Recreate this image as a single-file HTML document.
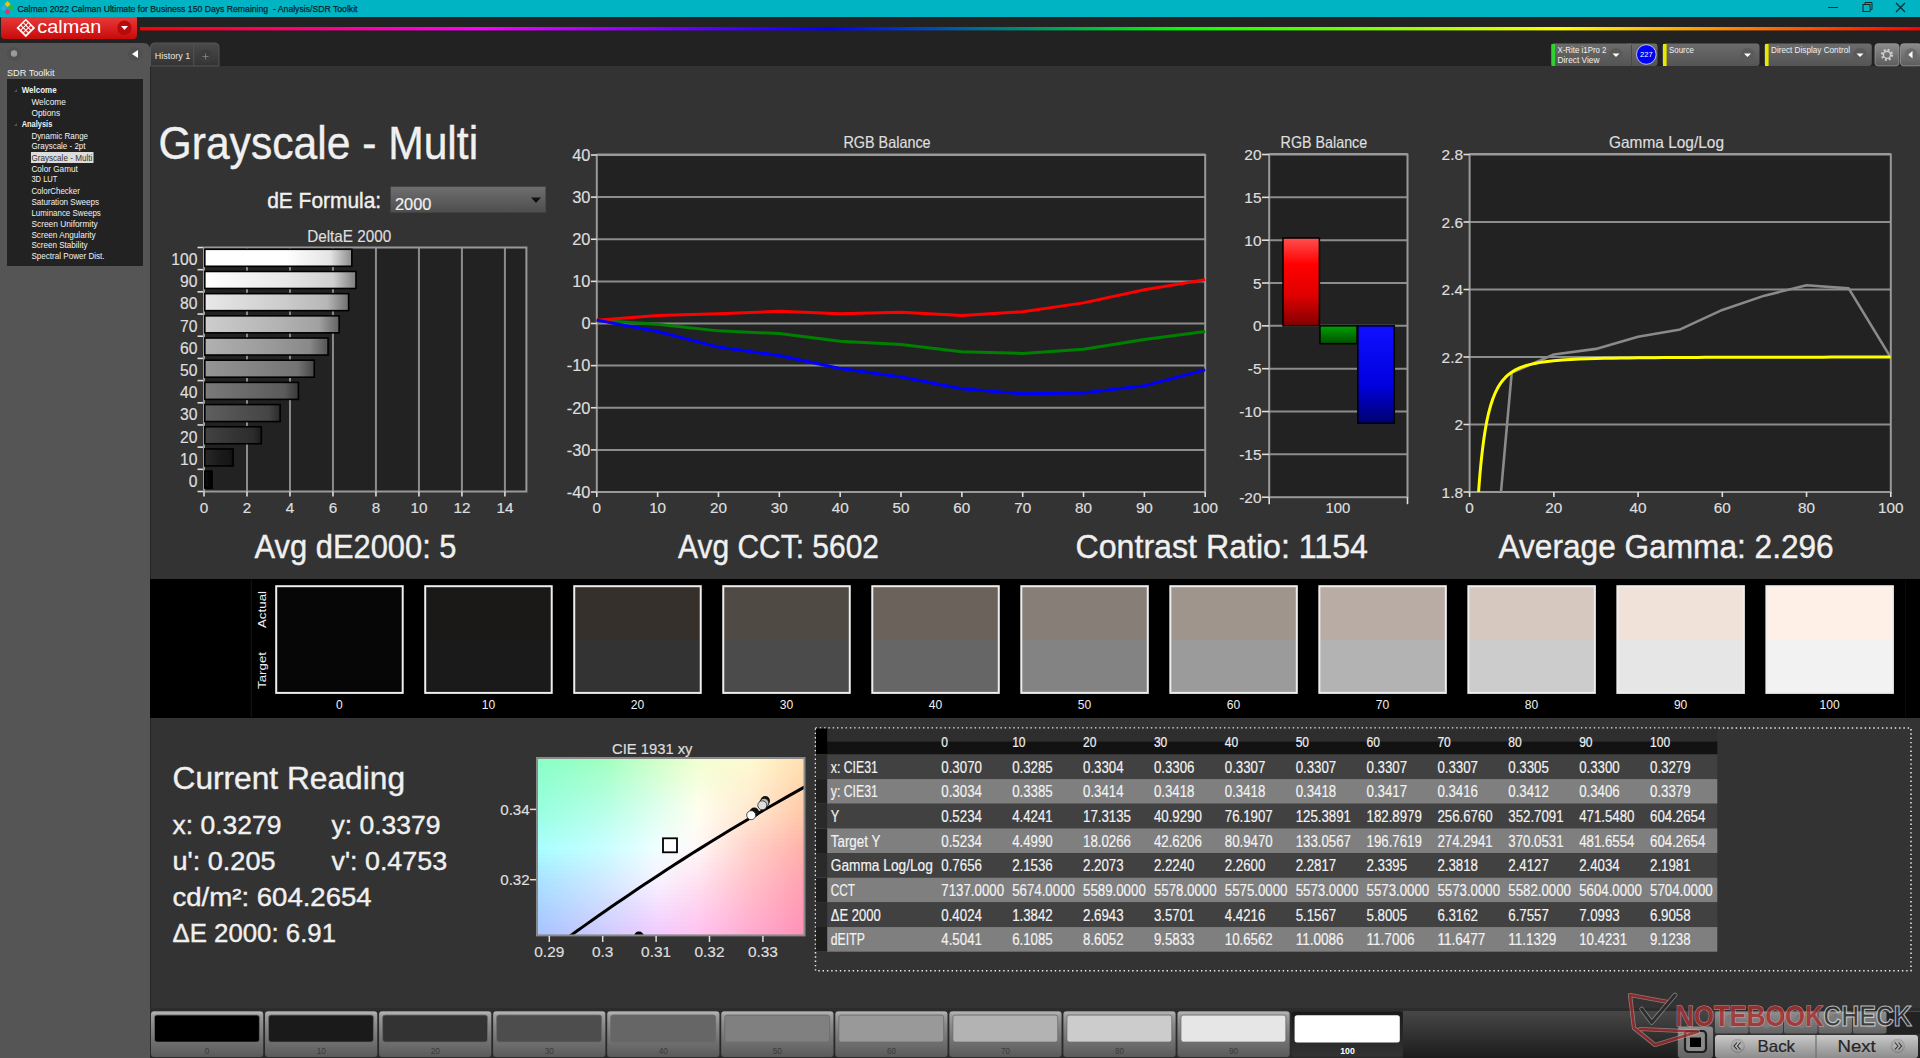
<!DOCTYPE html><html><head><meta charset="utf-8"><title>Calman</title><style>
html,body{margin:0;padding:0;background:#333;width:1920px;height:1058px;overflow:hidden;font-family:"Liberation Sans",sans-serif}
.a{position:absolute}
svg{position:absolute;left:0;top:0}
text{font-family:"Liberation Sans",sans-serif}
</style></head><body>
<div class="a" style="left:0;top:0;width:1920px;height:17px;background:#00b4c4"></div>
<div class="a" style="left:0;top:17px;width:1920px;height:49px;background:#222"></div>
<div class="a" style="left:150px;top:66px;width:1770px;height:992px;background:#333"></div>
<div class="a" style="left:0;top:43px;width:150px;height:1015px;background:#555555;border-top-right-radius:6px"></div>
<div class="a" style="left:150px;top:66px;width:1px;height:992px;background:#262626"></div>
<div class="a" style="left:7px;top:79px;width:136px;height:187px;background:#222"></div>
<div class="a" style="left:150px;top:579px;width:1770px;height:139px;background:#000"></div>
<svg width="1920" height="1058" viewBox="0 0 1920 1058">
<defs>
<linearGradient id="rainbow" x1="0" x2="1920" y1="0" y2="0" gradientUnits="userSpaceOnUse"><stop offset="0.074" stop-color="#ff0000"/><stop offset="0.25" stop-color="#ff00ff"/><stop offset="0.432" stop-color="#0000ff"/><stop offset="0.615" stop-color="#00ff00"/><stop offset="0.8125" stop-color="#ffff00"/><stop offset="1" stop-color="#ff0000"/></linearGradient>
<linearGradient id="redbtn" x1="0" x2="0" y1="0" y2="1"><stop offset="0" stop-color="#e83a3a"/><stop offset="1" stop-color="#c80a0a"/></linearGradient>
<linearGradient id="redbar" x1="0" x2="0" y1="0" y2="1"><stop offset="0" stop-color="#ff5050"/><stop offset="0.3" stop-color="#ff0000"/><stop offset="0.65" stop-color="#e00000"/><stop offset="1" stop-color="#800000"/></linearGradient>
<linearGradient id="greenbar" x1="0" x2="0" y1="0" y2="1"><stop offset="0" stop-color="#00a000"/><stop offset="1" stop-color="#005000"/></linearGradient>
<linearGradient id="bluebar" x1="0" x2="0" y1="0" y2="1"><stop offset="0" stop-color="#1010ff"/><stop offset="0.6" stop-color="#0000e0"/><stop offset="1" stop-color="#000070"/></linearGradient>
<linearGradient id="dd" x1="0" x2="0" y1="0" y2="1"><stop offset="0" stop-color="#6e6e6e"/><stop offset="1" stop-color="#4e4e4e"/></linearGradient>
<linearGradient id="btn" x1="0" x2="0" y1="0" y2="1"><stop offset="0" stop-color="#a8a8a8"/><stop offset="0.3" stop-color="#8a8a8a"/><stop offset="1" stop-color="#5a5a5a"/></linearGradient>
<linearGradient id="btnsel" x1="0" x2="0" y1="0" y2="1"><stop offset="0" stop-color="#1a1a1a"/><stop offset="1" stop-color="#333"/></linearGradient>
<linearGradient id="tbar" x1="0" x2="0" y1="0" y2="1"><stop offset="0" stop-color="#474747"/><stop offset="1" stop-color="#1c1c1c"/></linearGradient>
<linearGradient id="wid" x1="0" x2="0" y1="0" y2="1"><stop offset="0" stop-color="#6c6c6c"/><stop offset="1" stop-color="#545454"/></linearGradient>
<linearGradient id="tab" x1="0" x2="0" y1="0" y2="1"><stop offset="0" stop-color="#4a4a4a"/><stop offset="1" stop-color="#333"/></linearGradient>
</defs>
<g transform="translate(7.5,8)"><rect x="-2.2" y="-6" width="4.4" height="4.4" transform="rotate(45 0 -3.8)" fill="#f5c000"/><rect x="-6" y="-2.2" width="4.4" height="4.4" transform="rotate(45 -3.8 0)" fill="#38a8e8"/><rect x="1.6" y="-2.2" width="4.4" height="4.4" transform="rotate(45 3.8 0)" fill="#20c030"/><rect x="-2.2" y="1.6" width="4.4" height="4.4" transform="rotate(45 0 3.8)" fill="#e83070"/></g>
<text x="17.50" y="12.00" font-size="9.59" textLength="340.00" lengthAdjust="spacingAndGlyphs" fill="#02252b" stroke="#02252b" stroke-width="0.25">Calman 2022 Calman Ultimate for Business 150 Days Remaining  - Analysis/SDR Toolkit</text>
<line x1="1828" y1="7.5" x2="1838" y2="7.5" stroke="#222" stroke-width="1"/>
<rect x="1863" y="4.5" width="7" height="7" fill="none" stroke="#222" stroke-width="1"/><path d="M1865 4.5 V2.5 H1872 V9.5 H1870" fill="none" stroke="#222" stroke-width="1"/>
<path d="M1896 3 L1905 12 M1905 3 L1896 12" stroke="#222" stroke-width="1.2"/>
<path d="M1 17 H137 V35 Q137 39 133 39 H5 Q1 39 1 35 Z" fill="url(#redbtn)"/>
<g transform="translate(25.8,28) rotate(45)"><rect x="-6.6" y="-6.6" width="13.2" height="13.2" fill="#fff"/><rect x="-5.10" y="-5.10" width="2.6" height="2.6" fill="#d82020"/><rect x="-5.10" y="-1.50" width="2.6" height="2.6" fill="#d82020"/><rect x="-5.10" y="2.10" width="2.6" height="2.6" fill="#d82020"/><rect x="-1.50" y="-5.10" width="2.6" height="2.6" fill="#d82020"/><rect x="-1.50" y="-1.50" width="2.6" height="2.6" fill="#d82020"/><rect x="-1.50" y="2.10" width="2.6" height="2.6" fill="#d82020"/><rect x="2.10" y="-5.10" width="2.6" height="2.6" fill="#d82020"/><rect x="2.10" y="-1.50" width="2.6" height="2.6" fill="#d82020"/><rect x="2.10" y="2.10" width="2.6" height="2.6" fill="#d82020"/></g>
<text x="37.30" y="32.60" font-size="18.90" textLength="64.00" lengthAdjust="spacingAndGlyphs" fill="#fff" stroke="none">calman</text>
<circle cx="124.5" cy="27.8" r="7.2" fill="#b80a0a"/><path d="M121 26 H128 L124.5 30 Z" fill="#fff"/>
<rect x="140" y="27" width="1780" height="3.4" fill="url(#rainbow)"/>
<circle cx="14" cy="54" r="7" fill="#505050"/><circle cx="14" cy="53.5" r="3.2" fill="#9a9a9a"/>
<circle cx="135" cy="54" r="7" fill="#505050"/><path d="M132 54 L138 50 V58 Z" fill="#fff"/>
<text x="7.00" y="75.80" font-size="9.59" textLength="47.50" lengthAdjust="spacingAndGlyphs" fill="#f0f0f0">SDR Toolkit</text>
<rect x="31" y="152" width="62.5" height="11" fill="#dcdcdc"/>
<text x="21.70" y="93.10" font-size="8.72" textLength="34.90" lengthAdjust="spacingAndGlyphs" font-weight="bold" fill="#f2f2f2">Welcome</text>
<text x="31.40" y="105.10" font-size="8.72" textLength="34.40" lengthAdjust="spacingAndGlyphs" fill="#f2f2f2">Welcome</text>
<text x="31.40" y="116.00" font-size="8.72" textLength="28.80" lengthAdjust="spacingAndGlyphs" fill="#f2f2f2">Options</text>
<text x="21.70" y="126.80" font-size="8.72" textLength="30.60" lengthAdjust="spacingAndGlyphs" font-weight="bold" fill="#f2f2f2">Analysis</text>
<text x="31.40" y="139.00" font-size="8.72" textLength="56.60" lengthAdjust="spacingAndGlyphs" fill="#f2f2f2">Dynamic Range</text>
<text x="31.40" y="149.20" font-size="8.72" textLength="54.10" lengthAdjust="spacingAndGlyphs" fill="#f2f2f2">Grayscale - 2pt</text>
<text x="31.40" y="160.70" font-size="8.72" textLength="60.90" lengthAdjust="spacingAndGlyphs" fill="#333">Grayscale - Multi</text>
<text x="31.40" y="171.70" font-size="8.72" textLength="46.40" lengthAdjust="spacingAndGlyphs" fill="#f2f2f2">Color Gamut</text>
<text x="31.40" y="182.40" font-size="8.72" textLength="26.00" lengthAdjust="spacingAndGlyphs" fill="#f2f2f2">3D LUT</text>
<text x="31.40" y="193.90" font-size="8.72" textLength="48.40" lengthAdjust="spacingAndGlyphs" fill="#f2f2f2">ColorChecker</text>
<text x="31.40" y="204.80" font-size="8.72" textLength="67.60" lengthAdjust="spacingAndGlyphs" fill="#f2f2f2">Saturation Sweeps</text>
<text x="31.40" y="215.60" font-size="8.72" textLength="69.40" lengthAdjust="spacingAndGlyphs" fill="#f2f2f2">Luminance Sweeps</text>
<text x="31.40" y="226.50" font-size="8.72" textLength="66.30" lengthAdjust="spacingAndGlyphs" fill="#f2f2f2">Screen Uniformity</text>
<text x="31.40" y="237.80" font-size="8.72" textLength="64.30" lengthAdjust="spacingAndGlyphs" fill="#f2f2f2">Screen Angularity</text>
<text x="31.40" y="248.20" font-size="8.72" textLength="56.10" lengthAdjust="spacingAndGlyphs" fill="#f2f2f2">Screen Stability</text>
<text x="31.40" y="258.90" font-size="8.72" textLength="73.20" lengthAdjust="spacingAndGlyphs" fill="#f2f2f2">Spectral Power Dist.</text>
<path d="M14 92 L17 89 L17 92 Z" fill="#555"/><path d="M14 126 L17 123 L17 126 Z" fill="#555"/>
<path d="M150.5 66 V47 Q150.5 43 154.5 43 H215 Q219 43 219 47 V66 Z" fill="url(#tab)" stroke="#555" stroke-width="1"/>
<line x1="193.75" y1="44" x2="193.75" y2="66" stroke="#555" stroke-width="1"/>
<text x="154.80" y="58.50" font-size="9.59" textLength="35.50" lengthAdjust="spacingAndGlyphs" fill="#e8e8e8">History 1</text>
<circle cx="205.5" cy="56" r="6.5" fill="#3c3c3c"/><path d="M202.5 56.5 H208.5 M205.5 53.5 V59.5" stroke="#888" stroke-width="0.8"/>
<rect x="1551" y="43.5" width="81" height="22.5" rx="3" fill="url(#wid)"/>
<rect x="1551.5" y="44" width="3.6" height="22" fill="#30d030"/>
<text x="1557.50" y="52.60" font-size="9.30" textLength="49.00" lengthAdjust="spacingAndGlyphs" fill="#f0f0f0">X-Rite i1Pro 2</text>
<text x="1557.50" y="62.60" font-size="9.30" textLength="42.00" lengthAdjust="spacingAndGlyphs" fill="#f0f0f0">Direct View</text>
<circle cx="1616" cy="55" r="7" fill="#5a5a5a"/><path d="M1612.5 53.5 H1619.5 L1616 57 Z" fill="#fff"/>
<rect x="1625" y="43.5" width="32.5" height="22.5" rx="3" fill="url(#wid)"/><line x1="1631.5" y1="45" x2="1631.5" y2="66" stroke="#4a4a4a"/>
<circle cx="1646.3" cy="54.5" r="9.8" fill="#0000ff" stroke="#e0e0ff" stroke-width="0.8"/>
<text x="1646.30" y="57.20" font-size="7.56" text-anchor="middle" fill="#fff">227</text>
<rect x="1662.5" y="43.5" width="97.0" height="22.5" rx="3" fill="url(#wid)"/>
<rect x="1663.0" y="44" width="3.6" height="22" fill="#e8e800"/>
<text x="1669.00" y="52.60" font-size="9.30" textLength="25.00" lengthAdjust="spacingAndGlyphs" fill="#f0f0f0">Source</text>
<circle cx="1747.5" cy="55" r="7" fill="#5a5a5a"/><path d="M1744.0 53.5 H1751.0 L1747.5 57 Z" fill="#fff"/>
<rect x="1764.5" y="43.5" width="107.25" height="22.5" rx="3" fill="url(#wid)"/>
<rect x="1765.0" y="44" width="3.6" height="22" fill="#e8e800"/>
<text x="1771.00" y="52.60" font-size="9.30" textLength="79.00" lengthAdjust="spacingAndGlyphs" fill="#f0f0f0">Direct Display Control</text>
<circle cx="1860" cy="55" r="7" fill="#5a5a5a"/><path d="M1856.5 53.5 H1863.5 L1860 57 Z" fill="#fff"/>
<defs><linearGradient id="gbt" x1="0" x2="0" y1="0" y2="1"><stop offset="0" stop-color="#8c8c8c"/><stop offset="1" stop-color="#5c5c5c"/></linearGradient></defs>
<rect x="1875" y="43.8" width="24" height="22" rx="3" fill="url(#gbt)" stroke="#9a9a9a" stroke-width="0.8"/>
<circle cx="1887" cy="54.8" r="5" fill="none" stroke="#d0d0d0" stroke-width="2.2" stroke-dasharray="1.9 2.03"/><circle cx="1887" cy="54.8" r="3.6" fill="none" stroke="#d0d0d0" stroke-width="1.4"/>
<rect x="1900.5" y="43.8" width="21" height="22" rx="3" fill="url(#gbt)" stroke="#9a9a9a" stroke-width="0.8"/>
<circle cx="1911" cy="54.8" r="6.5" fill="#6a6a6a"/><path d="M1908.3 54.8 L1912.5 51 V58.6 Z" fill="#fff"/>
<text x="158.60" y="159.00" font-size="45.49" textLength="319.50" lengthAdjust="spacingAndGlyphs" fill="#f0f0f0" stroke="#f0f0f0" stroke-width="0.4">Grayscale - Multi</text>
<text x="267.20" y="207.50" font-size="22.09" textLength="114.00" lengthAdjust="spacingAndGlyphs" fill="#f0f0f0" stroke="#f0f0f0" stroke-width="0.4">dE Formula:</text>
<rect x="390.6" y="186.7" width="155.2" height="25.8" fill="url(#dd)" stroke="#444" stroke-width="0.6"/>
<text x="395.00" y="209.50" font-size="16.72" textLength="36.50" lengthAdjust="spacingAndGlyphs" fill="#f0f0f0" stroke="#f0f0f0" stroke-width="0.2">2000</text>
<path d="M531 197.5 H541 L536 203 Z" fill="#111"/>
<text x="307.20" y="242.30" font-size="16.72" textLength="84.00" lengthAdjust="spacingAndGlyphs" fill="#dedede" stroke="#dedede" stroke-width="0.2">DeltaE 2000</text>
<rect x="204" y="247.5" width="322.4" height="244.0" fill="#222"/>
<line x1="246.99" y1="247.5" x2="246.99" y2="491.5" stroke="#8c8c8c" stroke-width="2"/>
<line x1="289.97" y1="247.5" x2="289.97" y2="491.5" stroke="#8c8c8c" stroke-width="2"/>
<line x1="332.96" y1="247.5" x2="332.96" y2="491.5" stroke="#8c8c8c" stroke-width="2"/>
<line x1="375.95" y1="247.5" x2="375.95" y2="491.5" stroke="#8c8c8c" stroke-width="2"/>
<line x1="418.93" y1="247.5" x2="418.93" y2="491.5" stroke="#8c8c8c" stroke-width="2"/>
<line x1="461.92" y1="247.5" x2="461.92" y2="491.5" stroke="#8c8c8c" stroke-width="2"/>
<line x1="504.91" y1="247.5" x2="504.91" y2="491.5" stroke="#8c8c8c" stroke-width="2"/>
<rect x="204" y="247.5" width="322.4" height="244.0" fill="none" stroke="#999" stroke-width="2"/>
<defs><linearGradient id="dg0" x1="0" x2="1" y1="0" y2="0"><stop offset="0" stop-color="rgb(17,17,17)"/><stop offset="0.55" stop-color="rgb(5,5,5)"/><stop offset="0.85" stop-color="rgb(4,4,4)"/><stop offset="1" stop-color="rgb(2,2,2)"/></linearGradient></defs>
<rect x="204.80" y="471.11" width="7.25" height="17" fill="url(#dg0)" stroke="#000" stroke-width="1.6"/>
<text x="197.50" y="486.91" font-size="15.70" text-anchor="end" fill="#dedede" stroke="#dedede" stroke-width="0.2">0</text>
<defs><linearGradient id="dg1" x1="0" x2="1" y1="0" y2="0"><stop offset="0" stop-color="rgb(40,40,40)"/><stop offset="0.55" stop-color="rgb(26,26,26)"/><stop offset="0.85" stop-color="rgb(23,23,23)"/><stop offset="1" stop-color="rgb(14,14,14)"/></linearGradient></defs>
<rect x="204.80" y="448.93" width="28.35" height="17" fill="url(#dg1)" stroke="#000" stroke-width="1.6"/>
<text x="197.50" y="464.73" font-size="15.70" text-anchor="end" fill="#dedede" stroke="#dedede" stroke-width="0.2">10</text>
<defs><linearGradient id="dg2" x1="0" x2="1" y1="0" y2="0"><stop offset="0" stop-color="rgb(67,67,67)"/><stop offset="0.55" stop-color="rgb(51,51,51)"/><stop offset="0.85" stop-color="rgb(45,45,45)"/><stop offset="1" stop-color="rgb(28,28,28)"/></linearGradient></defs>
<rect x="204.80" y="426.75" width="56.51" height="17" fill="url(#dg2)" stroke="#000" stroke-width="1.6"/>
<text x="197.50" y="442.55" font-size="15.70" text-anchor="end" fill="#dedede" stroke="#dedede" stroke-width="0.2">20</text>
<defs><linearGradient id="dg3" x1="0" x2="1" y1="0" y2="0"><stop offset="0" stop-color="rgb(95,95,95)"/><stop offset="0.55" stop-color="rgb(77,77,77)"/><stop offset="0.85" stop-color="rgb(69,69,69)"/><stop offset="1" stop-color="rgb(42,42,42)"/></linearGradient></defs>
<rect x="204.80" y="404.56" width="75.33" height="17" fill="url(#dg3)" stroke="#000" stroke-width="1.6"/>
<text x="197.50" y="420.36" font-size="15.70" text-anchor="end" fill="#dedede" stroke="#dedede" stroke-width="0.2">30</text>
<defs><linearGradient id="dg4" x1="0" x2="1" y1="0" y2="0"><stop offset="0" stop-color="rgb(122,122,122)"/><stop offset="0.55" stop-color="rgb(102,102,102)"/><stop offset="0.85" stop-color="rgb(91,91,91)"/><stop offset="1" stop-color="rgb(56,56,56)"/></linearGradient></defs>
<rect x="204.80" y="382.38" width="93.63" height="17" fill="url(#dg4)" stroke="#000" stroke-width="1.6"/>
<text x="197.50" y="398.18" font-size="15.70" text-anchor="end" fill="#dedede" stroke="#dedede" stroke-width="0.2">40</text>
<defs><linearGradient id="dg5" x1="0" x2="1" y1="0" y2="0"><stop offset="0" stop-color="rgb(150,150,150)"/><stop offset="0.55" stop-color="rgb(128,128,128)"/><stop offset="0.85" stop-color="rgb(115,115,115)"/><stop offset="1" stop-color="rgb(70,70,70)"/></linearGradient></defs>
<rect x="204.80" y="360.20" width="109.43" height="17" fill="url(#dg5)" stroke="#000" stroke-width="1.6"/>
<text x="197.50" y="376.00" font-size="15.70" text-anchor="end" fill="#dedede" stroke="#dedede" stroke-width="0.2">50</text>
<defs><linearGradient id="dg6" x1="0" x2="1" y1="0" y2="0"><stop offset="0" stop-color="rgb(177,177,177)"/><stop offset="0.55" stop-color="rgb(153,153,153)"/><stop offset="0.85" stop-color="rgb(137,137,137)"/><stop offset="1" stop-color="rgb(84,84,84)"/></linearGradient></defs>
<rect x="204.80" y="338.02" width="123.27" height="17" fill="url(#dg6)" stroke="#000" stroke-width="1.6"/>
<text x="197.50" y="353.82" font-size="15.70" text-anchor="end" fill="#dedede" stroke="#dedede" stroke-width="0.2">60</text>
<defs><linearGradient id="dg7" x1="0" x2="1" y1="0" y2="0"><stop offset="0" stop-color="rgb(205,205,205)"/><stop offset="0.55" stop-color="rgb(179,179,179)"/><stop offset="0.85" stop-color="rgb(161,161,161)"/><stop offset="1" stop-color="rgb(98,98,98)"/></linearGradient></defs>
<rect x="204.80" y="315.84" width="134.36" height="17" fill="url(#dg7)" stroke="#000" stroke-width="1.6"/>
<text x="197.50" y="331.64" font-size="15.70" text-anchor="end" fill="#dedede" stroke="#dedede" stroke-width="0.2">70</text>
<defs><linearGradient id="dg8" x1="0" x2="1" y1="0" y2="0"><stop offset="0" stop-color="rgb(232,232,232)"/><stop offset="0.55" stop-color="rgb(204,204,204)"/><stop offset="0.85" stop-color="rgb(183,183,183)"/><stop offset="1" stop-color="rgb(112,112,112)"/></linearGradient></defs>
<rect x="204.80" y="293.65" width="143.80" height="17" fill="url(#dg8)" stroke="#000" stroke-width="1.6"/>
<text x="197.50" y="309.45" font-size="15.70" text-anchor="end" fill="#dedede" stroke="#dedede" stroke-width="0.2">80</text>
<defs><linearGradient id="dg9" x1="0" x2="1" y1="0" y2="0"><stop offset="0" stop-color="rgb(255,255,255)"/><stop offset="0.55" stop-color="rgb(230,230,230)"/><stop offset="0.85" stop-color="rgb(207,207,207)"/><stop offset="1" stop-color="rgb(126,126,126)"/></linearGradient></defs>
<rect x="204.80" y="271.47" width="151.19" height="17" fill="url(#dg9)" stroke="#000" stroke-width="1.6"/>
<text x="197.50" y="287.27" font-size="15.70" text-anchor="end" fill="#dedede" stroke="#dedede" stroke-width="0.2">90</text>
<defs><linearGradient id="dg10" x1="0" x2="1" y1="0" y2="0"><stop offset="0" stop-color="rgb(255,255,255)"/><stop offset="0.55" stop-color="rgb(255,255,255)"/><stop offset="0.85" stop-color="rgb(229,229,229)"/><stop offset="1" stop-color="rgb(140,140,140)"/></linearGradient></defs>
<rect x="204.80" y="249.29" width="147.03" height="17" fill="url(#dg10)" stroke="#000" stroke-width="1.6"/>
<text x="197.50" y="265.09" font-size="15.70" text-anchor="end" fill="#dedede" stroke="#dedede" stroke-width="0.2">100</text>
<line x1="197.5" y1="247.50" x2="203" y2="247.50" stroke="#dedede" stroke-width="1.6"/>
<line x1="197.5" y1="269.68" x2="203" y2="269.68" stroke="#dedede" stroke-width="1.6"/>
<line x1="197.5" y1="291.86" x2="203" y2="291.86" stroke="#dedede" stroke-width="1.6"/>
<line x1="197.5" y1="314.05" x2="203" y2="314.05" stroke="#dedede" stroke-width="1.6"/>
<line x1="197.5" y1="336.23" x2="203" y2="336.23" stroke="#dedede" stroke-width="1.6"/>
<line x1="197.5" y1="358.41" x2="203" y2="358.41" stroke="#dedede" stroke-width="1.6"/>
<line x1="197.5" y1="380.59" x2="203" y2="380.59" stroke="#dedede" stroke-width="1.6"/>
<line x1="197.5" y1="402.77" x2="203" y2="402.77" stroke="#dedede" stroke-width="1.6"/>
<line x1="197.5" y1="424.95" x2="203" y2="424.95" stroke="#dedede" stroke-width="1.6"/>
<line x1="197.5" y1="447.14" x2="203" y2="447.14" stroke="#dedede" stroke-width="1.6"/>
<line x1="197.5" y1="469.32" x2="203" y2="469.32" stroke="#dedede" stroke-width="1.6"/>
<line x1="197.5" y1="491.50" x2="203" y2="491.50" stroke="#dedede" stroke-width="1.6"/>
<line x1="204.00" y1="491.5" x2="204.00" y2="496.5" stroke="#dedede" stroke-width="1.6"/>
<text x="204.00" y="513.30" font-size="15.26" text-anchor="middle" fill="#dedede" stroke="#dedede" stroke-width="0.2">0</text>
<line x1="246.99" y1="491.5" x2="246.99" y2="496.5" stroke="#dedede" stroke-width="1.6"/>
<text x="246.99" y="513.30" font-size="15.26" text-anchor="middle" fill="#dedede" stroke="#dedede" stroke-width="0.2">2</text>
<line x1="289.97" y1="491.5" x2="289.97" y2="496.5" stroke="#dedede" stroke-width="1.6"/>
<text x="289.97" y="513.30" font-size="15.26" text-anchor="middle" fill="#dedede" stroke="#dedede" stroke-width="0.2">4</text>
<line x1="332.96" y1="491.5" x2="332.96" y2="496.5" stroke="#dedede" stroke-width="1.6"/>
<text x="332.96" y="513.30" font-size="15.26" text-anchor="middle" fill="#dedede" stroke="#dedede" stroke-width="0.2">6</text>
<line x1="375.95" y1="491.5" x2="375.95" y2="496.5" stroke="#dedede" stroke-width="1.6"/>
<text x="375.95" y="513.30" font-size="15.26" text-anchor="middle" fill="#dedede" stroke="#dedede" stroke-width="0.2">8</text>
<line x1="418.93" y1="491.5" x2="418.93" y2="496.5" stroke="#dedede" stroke-width="1.6"/>
<text x="418.93" y="513.30" font-size="15.26" text-anchor="middle" fill="#dedede" stroke="#dedede" stroke-width="0.2">10</text>
<line x1="461.92" y1="491.5" x2="461.92" y2="496.5" stroke="#dedede" stroke-width="1.6"/>
<text x="461.92" y="513.30" font-size="15.26" text-anchor="middle" fill="#dedede" stroke="#dedede" stroke-width="0.2">12</text>
<line x1="504.91" y1="491.5" x2="504.91" y2="496.5" stroke="#dedede" stroke-width="1.6"/>
<text x="504.91" y="513.30" font-size="15.26" text-anchor="middle" fill="#dedede" stroke="#dedede" stroke-width="0.2">14</text>
<text x="843.40" y="148.40" font-size="16.28" textLength="87.20" lengthAdjust="spacingAndGlyphs" fill="#dedede" stroke="#dedede" stroke-width="0.2">RGB Balance</text>
<rect x="596.8" y="155" width="608.4000000000001" height="337" fill="#222"/>
<line x1="596.8" y1="197.12" x2="1205.2" y2="197.12" stroke="#8c8c8c" stroke-width="2"/>
<line x1="596.8" y1="239.25" x2="1205.2" y2="239.25" stroke="#8c8c8c" stroke-width="2"/>
<line x1="596.8" y1="281.38" x2="1205.2" y2="281.38" stroke="#8c8c8c" stroke-width="2"/>
<line x1="596.8" y1="323.50" x2="1205.2" y2="323.50" stroke="#8c8c8c" stroke-width="2"/>
<line x1="596.8" y1="365.62" x2="1205.2" y2="365.62" stroke="#8c8c8c" stroke-width="2"/>
<line x1="596.8" y1="407.75" x2="1205.2" y2="407.75" stroke="#8c8c8c" stroke-width="2"/>
<line x1="596.8" y1="449.88" x2="1205.2" y2="449.88" stroke="#8c8c8c" stroke-width="2"/>
<path d="M596.8 492 V155 H1205.2 V492" fill="none" stroke="#999" stroke-width="2"/>
<line x1="596.8" y1="154.5" x2="1205.2" y2="154.5" stroke="#999" stroke-width="2"/>
<line x1="596.8" y1="492" x2="1205.2" y2="492" stroke="#999" stroke-width="2"/>
<line x1="591" y1="155.00" x2="596.8" y2="155.00" stroke="#dedede" stroke-width="1.6"/>
<text x="590.50" y="160.80" font-size="16.42" text-anchor="end" fill="#dedede" stroke="#dedede" stroke-width="0.2">40</text>
<line x1="591" y1="197.12" x2="596.8" y2="197.12" stroke="#dedede" stroke-width="1.6"/>
<text x="590.50" y="202.93" font-size="16.42" text-anchor="end" fill="#dedede" stroke="#dedede" stroke-width="0.2">30</text>
<line x1="591" y1="239.25" x2="596.8" y2="239.25" stroke="#dedede" stroke-width="1.6"/>
<text x="590.50" y="245.05" font-size="16.42" text-anchor="end" fill="#dedede" stroke="#dedede" stroke-width="0.2">20</text>
<line x1="591" y1="281.38" x2="596.8" y2="281.38" stroke="#dedede" stroke-width="1.6"/>
<text x="590.50" y="287.18" font-size="16.42" text-anchor="end" fill="#dedede" stroke="#dedede" stroke-width="0.2">10</text>
<line x1="591" y1="323.50" x2="596.8" y2="323.50" stroke="#dedede" stroke-width="1.6"/>
<text x="590.50" y="329.30" font-size="16.42" text-anchor="end" fill="#dedede" stroke="#dedede" stroke-width="0.2">0</text>
<line x1="591" y1="365.62" x2="596.8" y2="365.62" stroke="#dedede" stroke-width="1.6"/>
<text x="590.50" y="371.43" font-size="16.42" text-anchor="end" fill="#dedede" stroke="#dedede" stroke-width="0.2">-10</text>
<line x1="591" y1="407.75" x2="596.8" y2="407.75" stroke="#dedede" stroke-width="1.6"/>
<text x="590.50" y="413.55" font-size="16.42" text-anchor="end" fill="#dedede" stroke="#dedede" stroke-width="0.2">-20</text>
<line x1="591" y1="449.88" x2="596.8" y2="449.88" stroke="#dedede" stroke-width="1.6"/>
<text x="590.50" y="455.68" font-size="16.42" text-anchor="end" fill="#dedede" stroke="#dedede" stroke-width="0.2">-30</text>
<line x1="591" y1="492.00" x2="596.8" y2="492.00" stroke="#dedede" stroke-width="1.6"/>
<text x="590.50" y="497.80" font-size="16.42" text-anchor="end" fill="#dedede" stroke="#dedede" stroke-width="0.2">-40</text>
<line x1="596.80" y1="492" x2="596.80" y2="497" stroke="#dedede" stroke-width="1.6"/>
<text x="596.80" y="513.30" font-size="15.26" text-anchor="middle" fill="#dedede" stroke="#dedede" stroke-width="0.2">0</text>
<line x1="657.64" y1="492" x2="657.64" y2="497" stroke="#dedede" stroke-width="1.6"/>
<text x="657.64" y="513.30" font-size="15.26" text-anchor="middle" fill="#dedede" stroke="#dedede" stroke-width="0.2">10</text>
<line x1="718.48" y1="492" x2="718.48" y2="497" stroke="#dedede" stroke-width="1.6"/>
<text x="718.48" y="513.30" font-size="15.26" text-anchor="middle" fill="#dedede" stroke="#dedede" stroke-width="0.2">20</text>
<line x1="779.32" y1="492" x2="779.32" y2="497" stroke="#dedede" stroke-width="1.6"/>
<text x="779.32" y="513.30" font-size="15.26" text-anchor="middle" fill="#dedede" stroke="#dedede" stroke-width="0.2">30</text>
<line x1="840.16" y1="492" x2="840.16" y2="497" stroke="#dedede" stroke-width="1.6"/>
<text x="840.16" y="513.30" font-size="15.26" text-anchor="middle" fill="#dedede" stroke="#dedede" stroke-width="0.2">40</text>
<line x1="901.00" y1="492" x2="901.00" y2="497" stroke="#dedede" stroke-width="1.6"/>
<text x="901.00" y="513.30" font-size="15.26" text-anchor="middle" fill="#dedede" stroke="#dedede" stroke-width="0.2">50</text>
<line x1="961.84" y1="492" x2="961.84" y2="497" stroke="#dedede" stroke-width="1.6"/>
<text x="961.84" y="513.30" font-size="15.26" text-anchor="middle" fill="#dedede" stroke="#dedede" stroke-width="0.2">60</text>
<line x1="1022.68" y1="492" x2="1022.68" y2="497" stroke="#dedede" stroke-width="1.6"/>
<text x="1022.68" y="513.30" font-size="15.26" text-anchor="middle" fill="#dedede" stroke="#dedede" stroke-width="0.2">70</text>
<line x1="1083.52" y1="492" x2="1083.52" y2="497" stroke="#dedede" stroke-width="1.6"/>
<text x="1083.52" y="513.30" font-size="15.26" text-anchor="middle" fill="#dedede" stroke="#dedede" stroke-width="0.2">80</text>
<line x1="1144.36" y1="492" x2="1144.36" y2="497" stroke="#dedede" stroke-width="1.6"/>
<text x="1144.36" y="513.30" font-size="15.26" text-anchor="middle" fill="#dedede" stroke="#dedede" stroke-width="0.2">90</text>
<line x1="1205.20" y1="492" x2="1205.20" y2="497" stroke="#dedede" stroke-width="1.6"/>
<text x="1205.20" y="513.30" font-size="15.26" text-anchor="middle" fill="#dedede" stroke="#dedede" stroke-width="0.2">100</text>
<polyline points="596.80,320.13 657.64,324.34 718.48,330.87 779.32,333.61 840.16,341.19 901.00,344.56 961.84,351.72 1022.68,353.41 1083.52,349.20 1144.36,339.51 1205.20,331.50" fill="none" stroke="#008000" stroke-width="3" stroke-linejoin="round"/>
<polyline points="596.80,320.13 657.64,315.50 718.48,313.81 779.32,311.28 840.16,313.81 901.00,312.13 961.84,315.50 1022.68,311.71 1083.52,302.86 1144.36,289.80 1205.20,279.69" fill="none" stroke="#ff0000" stroke-width="3" stroke-linejoin="round"/>
<polyline points="596.80,320.13 657.64,331.50 718.48,347.09 779.32,355.51 840.16,368.57 901.00,377.00 961.84,388.79 1022.68,393.85 1083.52,393.01 1144.36,385.84 1205.20,369.84" fill="none" stroke="#0000ff" stroke-width="3" stroke-linejoin="round"/>
<text x="1280.60" y="148.40" font-size="16.28" textLength="86.60" lengthAdjust="spacingAndGlyphs" fill="#dedede" stroke="#dedede" stroke-width="0.2">RGB Balance</text>
<rect x="1269.2" y="154.5" width="138.29999999999995" height="342.7" fill="#222"/>
<line x1="1269.2" y1="197.34" x2="1407.5" y2="197.34" stroke="#8c8c8c" stroke-width="2"/>
<line x1="1269.2" y1="240.18" x2="1407.5" y2="240.18" stroke="#8c8c8c" stroke-width="2"/>
<line x1="1269.2" y1="283.01" x2="1407.5" y2="283.01" stroke="#8c8c8c" stroke-width="2"/>
<line x1="1269.2" y1="325.85" x2="1407.5" y2="325.85" stroke="#8c8c8c" stroke-width="2"/>
<line x1="1269.2" y1="368.69" x2="1407.5" y2="368.69" stroke="#8c8c8c" stroke-width="2"/>
<line x1="1269.2" y1="411.52" x2="1407.5" y2="411.52" stroke="#8c8c8c" stroke-width="2"/>
<line x1="1269.2" y1="454.36" x2="1407.5" y2="454.36" stroke="#8c8c8c" stroke-width="2"/>
<rect x="1269.2" y="154.5" width="138.29999999999995" height="342.7" fill="none" stroke="#999" stroke-width="2"/>
<line x1="1269.2" y1="154.0" x2="1407.5" y2="154.0" stroke="#999" stroke-width="2"/>
<line x1="1262" y1="154.50" x2="1269.2" y2="154.50" stroke="#dedede" stroke-width="1.6"/>
<text x="1261.50" y="160.00" font-size="15.41" text-anchor="end" fill="#dedede" stroke="#dedede" stroke-width="0.2">20</text>
<line x1="1262" y1="197.34" x2="1269.2" y2="197.34" stroke="#dedede" stroke-width="1.6"/>
<text x="1261.50" y="202.84" font-size="15.41" text-anchor="end" fill="#dedede" stroke="#dedede" stroke-width="0.2">15</text>
<line x1="1262" y1="240.18" x2="1269.2" y2="240.18" stroke="#dedede" stroke-width="1.6"/>
<text x="1261.50" y="245.68" font-size="15.41" text-anchor="end" fill="#dedede" stroke="#dedede" stroke-width="0.2">10</text>
<line x1="1262" y1="283.01" x2="1269.2" y2="283.01" stroke="#dedede" stroke-width="1.6"/>
<text x="1261.50" y="288.51" font-size="15.41" text-anchor="end" fill="#dedede" stroke="#dedede" stroke-width="0.2">5</text>
<line x1="1262" y1="325.85" x2="1269.2" y2="325.85" stroke="#dedede" stroke-width="1.6"/>
<text x="1261.50" y="331.35" font-size="15.41" text-anchor="end" fill="#dedede" stroke="#dedede" stroke-width="0.2">0</text>
<line x1="1262" y1="368.69" x2="1269.2" y2="368.69" stroke="#dedede" stroke-width="1.6"/>
<text x="1261.50" y="374.19" font-size="15.41" text-anchor="end" fill="#dedede" stroke="#dedede" stroke-width="0.2">-5</text>
<line x1="1262" y1="411.52" x2="1269.2" y2="411.52" stroke="#dedede" stroke-width="1.6"/>
<text x="1261.50" y="417.02" font-size="15.41" text-anchor="end" fill="#dedede" stroke="#dedede" stroke-width="0.2">-10</text>
<line x1="1262" y1="454.36" x2="1269.2" y2="454.36" stroke="#dedede" stroke-width="1.6"/>
<text x="1261.50" y="459.86" font-size="15.41" text-anchor="end" fill="#dedede" stroke="#dedede" stroke-width="0.2">-15</text>
<line x1="1262" y1="497.20" x2="1269.2" y2="497.20" stroke="#dedede" stroke-width="1.6"/>
<text x="1261.50" y="502.70" font-size="15.41" text-anchor="end" fill="#dedede" stroke="#dedede" stroke-width="0.2">-20</text>
<line x1="1269.2" y1="497.2" x2="1269.2" y2="504.2" stroke="#dedede" stroke-width="1.6"/>
<line x1="1407.5" y1="497.2" x2="1407.5" y2="504.2" stroke="#dedede" stroke-width="1.6"/>
<text x="1337.80" y="513.40" font-size="14.83" text-anchor="middle" fill="#dedede" stroke="#dedede" stroke-width="0.2">100</text>
<rect x="1283" y="238.03" width="36.4" height="87.82" fill="url(#redbar)" stroke="#000" stroke-width="1.5"/>
<rect x="1320" y="325.85" width="37" height="17.82" fill="url(#greenbar)" stroke="#000" stroke-width="1.5"/>
<rect x="1357.8" y="325.85" width="36.5" height="97.41" fill="url(#bluebar)" stroke="#000" stroke-width="1.5"/>
<text x="1609.00" y="148.40" font-size="16.28" textLength="115.00" lengthAdjust="spacingAndGlyphs" fill="#dedede" stroke="#dedede" stroke-width="0.2">Gamma Log/Log</text>
<rect x="1469.6" y="154.5" width="421.20000000000005" height="337.5" fill="#222"/>
<line x1="1469.6" y1="222.00" x2="1890.8" y2="222.00" stroke="#8c8c8c" stroke-width="2"/>
<line x1="1469.6" y1="289.50" x2="1890.8" y2="289.50" stroke="#8c8c8c" stroke-width="2"/>
<line x1="1469.6" y1="357.00" x2="1890.8" y2="357.00" stroke="#8c8c8c" stroke-width="2"/>
<line x1="1469.6" y1="424.50" x2="1890.8" y2="424.50" stroke="#8c8c8c" stroke-width="2"/>
<rect x="1469.6" y="154.5" width="421.20000000000005" height="337.5" fill="none" stroke="#999" stroke-width="2"/>
<line x1="1469.6" y1="154.0" x2="1890.8" y2="154.0" stroke="#999" stroke-width="2"/>
<line x1="1463.5" y1="154.50" x2="1469.6" y2="154.50" stroke="#dedede" stroke-width="1.6"/>
<text x="1463.00" y="160.10" font-size="15.41" text-anchor="end" fill="#dedede" stroke="#dedede" stroke-width="0.2">2.8</text>
<line x1="1463.5" y1="222.00" x2="1469.6" y2="222.00" stroke="#dedede" stroke-width="1.6"/>
<text x="1463.00" y="227.60" font-size="15.41" text-anchor="end" fill="#dedede" stroke="#dedede" stroke-width="0.2">2.6</text>
<line x1="1463.5" y1="289.50" x2="1469.6" y2="289.50" stroke="#dedede" stroke-width="1.6"/>
<text x="1463.00" y="295.10" font-size="15.41" text-anchor="end" fill="#dedede" stroke="#dedede" stroke-width="0.2">2.4</text>
<line x1="1463.5" y1="357.00" x2="1469.6" y2="357.00" stroke="#dedede" stroke-width="1.6"/>
<text x="1463.00" y="362.60" font-size="15.41" text-anchor="end" fill="#dedede" stroke="#dedede" stroke-width="0.2">2.2</text>
<line x1="1463.5" y1="424.50" x2="1469.6" y2="424.50" stroke="#dedede" stroke-width="1.6"/>
<text x="1463.00" y="430.10" font-size="15.41" text-anchor="end" fill="#dedede" stroke="#dedede" stroke-width="0.2">2</text>
<line x1="1463.5" y1="492.00" x2="1469.6" y2="492.00" stroke="#dedede" stroke-width="1.6"/>
<text x="1463.00" y="497.60" font-size="15.41" text-anchor="end" fill="#dedede" stroke="#dedede" stroke-width="0.2">1.8</text>
<line x1="1469.60" y1="492.0" x2="1469.60" y2="497.0" stroke="#dedede" stroke-width="1.6"/>
<text x="1469.60" y="513.30" font-size="15.26" text-anchor="middle" fill="#dedede" stroke="#dedede" stroke-width="0.2">0</text>
<line x1="1553.84" y1="492.0" x2="1553.84" y2="497.0" stroke="#dedede" stroke-width="1.6"/>
<text x="1553.84" y="513.30" font-size="15.26" text-anchor="middle" fill="#dedede" stroke="#dedede" stroke-width="0.2">20</text>
<line x1="1638.08" y1="492.0" x2="1638.08" y2="497.0" stroke="#dedede" stroke-width="1.6"/>
<text x="1638.08" y="513.30" font-size="15.26" text-anchor="middle" fill="#dedede" stroke="#dedede" stroke-width="0.2">40</text>
<line x1="1722.32" y1="492.0" x2="1722.32" y2="497.0" stroke="#dedede" stroke-width="1.6"/>
<text x="1722.32" y="513.30" font-size="15.26" text-anchor="middle" fill="#dedede" stroke="#dedede" stroke-width="0.2">60</text>
<line x1="1806.56" y1="492.0" x2="1806.56" y2="497.0" stroke="#dedede" stroke-width="1.6"/>
<text x="1806.56" y="513.30" font-size="15.26" text-anchor="middle" fill="#dedede" stroke="#dedede" stroke-width="0.2">80</text>
<line x1="1890.80" y1="492.0" x2="1890.80" y2="497.0" stroke="#dedede" stroke-width="1.6"/>
<text x="1890.80" y="513.30" font-size="15.26" text-anchor="middle" fill="#dedede" stroke="#dedede" stroke-width="0.2">100</text>
<clipPath id="gclip"><rect x="1469.6" y="154.5" width="421.20000000000005" height="337.5"/></clipPath>
<polyline clip-path="url(#gclip)" points="1469.60,841.11 1511.72,372.66 1553.84,354.54 1595.96,348.90 1638.08,336.75 1680.20,329.43 1722.32,309.92 1764.44,295.64 1806.56,285.21 1848.68,288.35 1890.80,357.64" fill="none" stroke="#8a8a8a" stroke-width="2.6" stroke-linejoin="round"/>
<polyline clip-path="url(#gclip)" points="1477.18,513.72 1477.60,506.65 1478.02,500.03 1478.45,493.80 1478.87,487.95 1479.29,482.43 1479.71,477.24 1480.13,472.34 1480.55,467.71 1480.97,463.34 1481.39,459.20 1481.81,455.29 1482.24,451.58 1482.66,448.06 1483.08,444.72 1483.50,441.55 1483.92,438.54 1484.34,435.68 1484.76,432.95 1485.18,430.35 1485.61,427.87 1486.03,425.51 1486.45,423.26 1486.87,421.11 1487.29,419.05 1487.71,417.09 1488.13,415.21 1488.55,413.41 1488.98,411.69 1489.40,410.04 1490.66,405.49 1492.77,399.03 1494.87,393.71 1496.98,389.28 1499.08,385.57 1501.19,382.42 1503.30,379.73 1505.40,377.43 1507.51,375.43 1509.61,373.70 1511.72,372.19 1513.83,370.86 1515.93,369.68 1518.04,368.65 1520.14,367.72 1522.25,366.90 1524.36,366.16 1526.46,365.49 1528.57,364.89 1530.67,364.35 1532.78,363.86 1534.89,363.41 1536.99,363.00 1539.10,362.63 1541.20,362.29 1543.31,361.98 1545.42,361.69 1547.52,361.42 1549.63,361.18 1551.73,360.95 1553.84,360.74 1562.26,360.04 1570.69,359.51 1579.11,359.10 1587.54,358.78 1595.96,358.52 1604.38,358.31 1612.81,358.14 1621.23,358.00 1629.66,357.88 1638.08,357.78 1646.50,357.70 1654.93,357.63 1663.35,357.56 1671.78,357.51 1680.20,357.46 1688.62,357.42 1697.05,357.39 1705.47,357.35 1713.90,357.32 1722.32,357.30 1730.74,357.28 1739.17,357.26 1747.59,357.24 1756.02,357.22 1764.44,357.21 1772.86,357.19 1781.29,357.18 1789.71,357.17 1798.14,357.16 1806.56,357.15 1814.98,357.14 1823.41,357.13 1831.83,357.12 1840.26,357.12 1848.68,357.11 1857.10,357.11 1865.53,357.10 1873.95,357.10 1882.38,357.09 1890.80,357.09" fill="none" stroke="#ffff00" stroke-width="3" stroke-linejoin="round"/>
<text x="254.50" y="558.20" font-size="33.28" textLength="202.00" lengthAdjust="spacingAndGlyphs" fill="#f0f0f0" stroke="#f0f0f0" stroke-width="0.4">Avg dE2000: 5</text>
<text x="678.00" y="558.20" font-size="33.28" textLength="201.00" lengthAdjust="spacingAndGlyphs" fill="#f0f0f0" stroke="#f0f0f0" stroke-width="0.4">Avg CCT: 5602</text>
<text x="1075.50" y="558.20" font-size="33.28" textLength="292.50" lengthAdjust="spacingAndGlyphs" fill="#f0f0f0" stroke="#f0f0f0" stroke-width="0.4">Contrast Ratio: 1154</text>
<text x="1498.50" y="558.20" font-size="33.28" textLength="335.20" lengthAdjust="spacingAndGlyphs" fill="#f0f0f0" stroke="#f0f0f0" stroke-width="0.4">Average Gamma: 2.296</text>
<line x1="251.3" y1="580" x2="251.3" y2="717" stroke="#151515" stroke-width="1"/>
<line x1="1905.5" y1="580" x2="1905.5" y2="717" stroke="#0c0c0c" stroke-width="1"/>
<text x="266.30" y="609.50" font-size="10.17" textLength="37.00" lengthAdjust="spacingAndGlyphs" text-anchor="middle" fill="#f0f0f0" transform="rotate(-90 266.3 609.5)">Actual</text>
<text x="266.30" y="670.50" font-size="10.17" textLength="37.00" lengthAdjust="spacingAndGlyphs" text-anchor="middle" fill="#f0f0f0" transform="rotate(-90 266.3 670.5)">Target</text>
<rect x="276.20" y="586" width="126.5" height="54" fill="#060606"/>
<rect x="276.20" y="640" width="126.5" height="53" fill="#060606"/>
<rect x="276.20" y="586.2" width="126.5" height="106.7" fill="none" stroke="#eeeeee" stroke-width="2"/>
<text x="339.40" y="708.80" font-size="12.06" text-anchor="middle" fill="#f0f0f0">0</text>
<rect x="425.22" y="586" width="126.5" height="54" fill="#1b1917"/>
<rect x="425.22" y="640" width="126.5" height="53" fill="#1a1a1a"/>
<rect x="425.22" y="586.2" width="126.5" height="106.7" fill="none" stroke="#eeeeee" stroke-width="2"/>
<text x="488.42" y="708.80" font-size="12.06" text-anchor="middle" fill="#f0f0f0">10</text>
<rect x="574.24" y="586" width="126.5" height="54" fill="#35302c"/>
<rect x="574.24" y="640" width="126.5" height="53" fill="#333333"/>
<rect x="574.24" y="586.2" width="126.5" height="106.7" fill="none" stroke="#eeeeee" stroke-width="2"/>
<text x="637.44" y="708.80" font-size="12.06" text-anchor="middle" fill="#f0f0f0">20</text>
<rect x="723.26" y="586" width="126.5" height="54" fill="#504a45"/>
<rect x="723.26" y="640" width="126.5" height="53" fill="#4b4b4b"/>
<rect x="723.26" y="586.2" width="126.5" height="106.7" fill="none" stroke="#eeeeee" stroke-width="2"/>
<text x="786.46" y="708.80" font-size="12.06" text-anchor="middle" fill="#f0f0f0">30</text>
<rect x="872.28" y="586" width="126.5" height="54" fill="#6b625c"/>
<rect x="872.28" y="640" width="126.5" height="53" fill="#666666"/>
<rect x="872.28" y="586.2" width="126.5" height="106.7" fill="none" stroke="#eeeeee" stroke-width="2"/>
<text x="935.48" y="708.80" font-size="12.06" text-anchor="middle" fill="#f0f0f0">40</text>
<rect x="1021.30" y="586" width="126.5" height="54" fill="#877e78"/>
<rect x="1021.30" y="640" width="126.5" height="53" fill="#838383"/>
<rect x="1021.30" y="586.2" width="126.5" height="106.7" fill="none" stroke="#eeeeee" stroke-width="2"/>
<text x="1084.50" y="708.80" font-size="12.06" text-anchor="middle" fill="#f0f0f0">50</text>
<rect x="1170.32" y="586" width="126.5" height="54" fill="#a0958c"/>
<rect x="1170.32" y="640" width="126.5" height="53" fill="#9b9b9b"/>
<rect x="1170.32" y="586.2" width="126.5" height="106.7" fill="none" stroke="#eeeeee" stroke-width="2"/>
<text x="1233.52" y="708.80" font-size="12.06" text-anchor="middle" fill="#f0f0f0">60</text>
<rect x="1319.34" y="586" width="126.5" height="54" fill="#b8aca4"/>
<rect x="1319.34" y="640" width="126.5" height="53" fill="#b3b3b3"/>
<rect x="1319.34" y="586.2" width="126.5" height="106.7" fill="none" stroke="#eeeeee" stroke-width="2"/>
<text x="1382.54" y="708.80" font-size="12.06" text-anchor="middle" fill="#f0f0f0">70</text>
<rect x="1468.36" y="586" width="126.5" height="54" fill="#d6c8bf"/>
<rect x="1468.36" y="640" width="126.5" height="53" fill="#cccccc"/>
<rect x="1468.36" y="586.2" width="126.5" height="106.7" fill="none" stroke="#eeeeee" stroke-width="2"/>
<text x="1531.56" y="708.80" font-size="12.06" text-anchor="middle" fill="#f0f0f0">80</text>
<rect x="1617.38" y="586" width="126.5" height="54" fill="#f0e2d8"/>
<rect x="1617.38" y="640" width="126.5" height="53" fill="#e6e6e6"/>
<rect x="1617.38" y="586.2" width="126.5" height="106.7" fill="none" stroke="#eeeeee" stroke-width="2"/>
<text x="1680.58" y="708.80" font-size="12.06" text-anchor="middle" fill="#f0f0f0">90</text>
<rect x="1766.40" y="586" width="126.5" height="54" fill="#fff0e7"/>
<rect x="1766.40" y="640" width="126.5" height="53" fill="#f2f2f2"/>
<rect x="1766.40" y="586.2" width="126.5" height="106.7" fill="none" stroke="#eeeeee" stroke-width="2"/>
<text x="1829.60" y="708.80" font-size="12.06" text-anchor="middle" fill="#f0f0f0">100</text>
<text x="172.50" y="789.10" font-size="31.40" textLength="232.50" lengthAdjust="spacingAndGlyphs" fill="#f0f0f0" stroke="#f0f0f0" stroke-width="0.4">Current Reading</text>
<text x="172.50" y="834.40" font-size="26.16" textLength="109.00" lengthAdjust="spacingAndGlyphs" fill="#f0f0f0" stroke="#f0f0f0" stroke-width="0.4">x: 0.3279</text>
<text x="331.50" y="834.40" font-size="26.16" textLength="109.00" lengthAdjust="spacingAndGlyphs" fill="#f0f0f0" stroke="#f0f0f0" stroke-width="0.4">y: 0.3379</text>
<text x="172.50" y="870.10" font-size="26.16" textLength="103.00" lengthAdjust="spacingAndGlyphs" fill="#f0f0f0" stroke="#f0f0f0" stroke-width="0.4">u': 0.205</text>
<text x="331.50" y="870.10" font-size="26.16" textLength="115.60" lengthAdjust="spacingAndGlyphs" fill="#f0f0f0" stroke="#f0f0f0" stroke-width="0.4">v': 0.4753</text>
<text x="172.50" y="905.80" font-size="26.16" textLength="199.20" lengthAdjust="spacingAndGlyphs" fill="#f0f0f0" stroke="#f0f0f0" stroke-width="0.4">cd/m²: 604.2654</text>
<text x="172.50" y="942.20" font-size="26.16" textLength="163.50" lengthAdjust="spacingAndGlyphs" fill="#f0f0f0" stroke="#f0f0f0" stroke-width="0.4">ΔE 2000: 6.91</text>
<text x="612.00" y="753.50" font-size="15.26" textLength="80.50" lengthAdjust="spacingAndGlyphs" fill="#dedede" stroke="#dedede" stroke-width="0.2">CIE 1931 xy</text>
<linearGradient id="cg0" x1="0" x2="1" y1="0" y2="0"><stop offset="0" stop-color="rgb(137,255,201)"/><stop offset="0.25" stop-color="rgb(161,255,193)"/><stop offset="0.45" stop-color="rgb(209,255,201)"/><stop offset="0.6" stop-color="rgb(241,255,209)"/><stop offset="0.8" stop-color="rgb(255,249,208)"/><stop offset="1.0" stop-color="rgb(255,223,176)"/></linearGradient>
<rect x="537" y="758" width="268" height="4" shape-rendering="crispEdges" fill="url(#cg0)"/>
<linearGradient id="cg1" x1="0" x2="1" y1="0" y2="0"><stop offset="0" stop-color="rgb(138,255,203)"/><stop offset="0.25" stop-color="rgb(163,255,196)"/><stop offset="0.45" stop-color="rgb(210,255,204)"/><stop offset="0.6" stop-color="rgb(242,255,212)"/><stop offset="0.8" stop-color="rgb(255,248,208)"/><stop offset="1.0" stop-color="rgb(255,221,175)"/></linearGradient>
<rect x="537" y="762" width="268" height="4" shape-rendering="crispEdges" fill="url(#cg1)"/>
<linearGradient id="cg2" x1="0" x2="1" y1="0" y2="0"><stop offset="0" stop-color="rgb(139,255,204)"/><stop offset="0.25" stop-color="rgb(164,255,199)"/><stop offset="0.45" stop-color="rgb(211,255,207)"/><stop offset="0.6" stop-color="rgb(243,255,214)"/><stop offset="0.8" stop-color="rgb(255,247,208)"/><stop offset="1.0" stop-color="rgb(255,220,175)"/></linearGradient>
<rect x="537" y="766" width="268" height="4" shape-rendering="crispEdges" fill="url(#cg2)"/>
<linearGradient id="cg3" x1="0" x2="1" y1="0" y2="0"><stop offset="0" stop-color="rgb(140,255,206)"/><stop offset="0.25" stop-color="rgb(166,255,202)"/><stop offset="0.45" stop-color="rgb(212,255,210)"/><stop offset="0.6" stop-color="rgb(244,255,216)"/><stop offset="0.8" stop-color="rgb(255,245,208)"/><stop offset="1.0" stop-color="rgb(255,218,174)"/></linearGradient>
<rect x="537" y="770" width="268" height="4" shape-rendering="crispEdges" fill="url(#cg3)"/>
<linearGradient id="cg4" x1="0" x2="1" y1="0" y2="0"><stop offset="0" stop-color="rgb(141,255,208)"/><stop offset="0.25" stop-color="rgb(168,255,205)"/><stop offset="0.45" stop-color="rgb(213,255,213)"/><stop offset="0.6" stop-color="rgb(245,255,219)"/><stop offset="0.8" stop-color="rgb(255,244,208)"/><stop offset="1.0" stop-color="rgb(255,216,173)"/></linearGradient>
<rect x="537" y="774" width="268" height="4" shape-rendering="crispEdges" fill="url(#cg4)"/>
<linearGradient id="cg5" x1="0" x2="1" y1="0" y2="0"><stop offset="0" stop-color="rgb(143,255,210)"/><stop offset="0.25" stop-color="rgb(170,255,208)"/><stop offset="0.45" stop-color="rgb(215,255,216)"/><stop offset="0.6" stop-color="rgb(246,255,221)"/><stop offset="0.8" stop-color="rgb(255,243,208)"/><stop offset="1.0" stop-color="rgb(255,214,173)"/></linearGradient>
<rect x="537" y="778" width="268" height="4" shape-rendering="crispEdges" fill="url(#cg5)"/>
<linearGradient id="cg6" x1="0" x2="1" y1="0" y2="0"><stop offset="0" stop-color="rgb(144,255,212)"/><stop offset="0.25" stop-color="rgb(172,255,211)"/><stop offset="0.45" stop-color="rgb(216,255,219)"/><stop offset="0.6" stop-color="rgb(247,255,223)"/><stop offset="0.8" stop-color="rgb(255,241,208)"/><stop offset="1.0" stop-color="rgb(255,212,172)"/></linearGradient>
<rect x="537" y="782" width="268" height="4" shape-rendering="crispEdges" fill="url(#cg6)"/>
<linearGradient id="cg7" x1="0" x2="1" y1="0" y2="0"><stop offset="0" stop-color="rgb(145,255,213)"/><stop offset="0.25" stop-color="rgb(173,255,214)"/><stop offset="0.45" stop-color="rgb(217,255,222)"/><stop offset="0.6" stop-color="rgb(248,255,226)"/><stop offset="0.8" stop-color="rgb(255,240,208)"/><stop offset="1.0" stop-color="rgb(255,211,172)"/></linearGradient>
<rect x="537" y="786" width="268" height="4" shape-rendering="crispEdges" fill="url(#cg7)"/>
<linearGradient id="cg8" x1="0" x2="1" y1="0" y2="0"><stop offset="0" stop-color="rgb(146,255,215)"/><stop offset="0.25" stop-color="rgb(175,255,217)"/><stop offset="0.45" stop-color="rgb(218,255,225)"/><stop offset="0.6" stop-color="rgb(249,255,228)"/><stop offset="0.8" stop-color="rgb(255,239,208)"/><stop offset="1.0" stop-color="rgb(255,209,171)"/></linearGradient>
<rect x="537" y="790" width="268" height="4" shape-rendering="crispEdges" fill="url(#cg8)"/>
<linearGradient id="cg9" x1="0" x2="1" y1="0" y2="0"><stop offset="0" stop-color="rgb(147,255,217)"/><stop offset="0.25" stop-color="rgb(177,255,220)"/><stop offset="0.45" stop-color="rgb(219,255,228)"/><stop offset="0.6" stop-color="rgb(251,255,231)"/><stop offset="0.8" stop-color="rgb(255,237,208)"/><stop offset="1.0" stop-color="rgb(255,207,170)"/></linearGradient>
<rect x="537" y="794" width="268" height="4" shape-rendering="crispEdges" fill="url(#cg9)"/>
<linearGradient id="cg10" x1="0" x2="1" y1="0" y2="0"><stop offset="0" stop-color="rgb(148,255,219)"/><stop offset="0.25" stop-color="rgb(179,255,223)"/><stop offset="0.45" stop-color="rgb(220,255,231)"/><stop offset="0.6" stop-color="rgb(252,255,233)"/><stop offset="0.8" stop-color="rgb(255,236,208)"/><stop offset="1.0" stop-color="rgb(255,205,170)"/></linearGradient>
<rect x="537" y="798" width="268" height="4" shape-rendering="crispEdges" fill="url(#cg10)"/>
<linearGradient id="cg11" x1="0" x2="1" y1="0" y2="0"><stop offset="0" stop-color="rgb(150,255,220)"/><stop offset="0.25" stop-color="rgb(180,255,226)"/><stop offset="0.45" stop-color="rgb(222,255,234)"/><stop offset="0.6" stop-color="rgb(253,255,235)"/><stop offset="0.8" stop-color="rgb(255,235,208)"/><stop offset="1.0" stop-color="rgb(255,204,169)"/></linearGradient>
<rect x="537" y="802" width="268" height="4" shape-rendering="crispEdges" fill="url(#cg11)"/>
<linearGradient id="cg12" x1="0" x2="1" y1="0" y2="0"><stop offset="0" stop-color="rgb(151,255,222)"/><stop offset="0.25" stop-color="rgb(182,255,229)"/><stop offset="0.45" stop-color="rgb(223,255,237)"/><stop offset="0.6" stop-color="rgb(254,255,238)"/><stop offset="0.8" stop-color="rgb(255,233,208)"/><stop offset="1.0" stop-color="rgb(255,202,169)"/></linearGradient>
<rect x="537" y="806" width="268" height="4" shape-rendering="crispEdges" fill="url(#cg12)"/>
<linearGradient id="cg13" x1="0" x2="1" y1="0" y2="0"><stop offset="0" stop-color="rgb(152,255,224)"/><stop offset="0.25" stop-color="rgb(184,255,232)"/><stop offset="0.45" stop-color="rgb(224,255,240)"/><stop offset="0.6" stop-color="rgb(255,255,240)"/><stop offset="0.8" stop-color="rgb(255,232,208)"/><stop offset="1.0" stop-color="rgb(255,200,168)"/></linearGradient>
<rect x="537" y="810" width="268" height="4" shape-rendering="crispEdges" fill="url(#cg13)"/>
<linearGradient id="cg14" x1="0" x2="1" y1="0" y2="0"><stop offset="0" stop-color="rgb(154,255,227)"/><stop offset="0.25" stop-color="rgb(186,255,235)"/><stop offset="0.45" stop-color="rgb(226,255,242)"/><stop offset="0.6" stop-color="rgb(255,254,241)"/><stop offset="0.8" stop-color="rgb(255,229,207)"/><stop offset="1.0" stop-color="rgb(255,197,168)"/></linearGradient>
<rect x="537" y="814" width="268" height="4" shape-rendering="crispEdges" fill="url(#cg14)"/>
<linearGradient id="cg15" x1="0" x2="1" y1="0" y2="0"><stop offset="0" stop-color="rgb(156,255,231)"/><stop offset="0.25" stop-color="rgb(188,255,237)"/><stop offset="0.45" stop-color="rgb(228,255,243)"/><stop offset="0.6" stop-color="rgb(255,253,242)"/><stop offset="0.8" stop-color="rgb(255,227,206)"/><stop offset="1.0" stop-color="rgb(255,195,168)"/></linearGradient>
<rect x="537" y="818" width="268" height="4" shape-rendering="crispEdges" fill="url(#cg15)"/>
<linearGradient id="cg16" x1="0" x2="1" y1="0" y2="0"><stop offset="0" stop-color="rgb(157,255,234)"/><stop offset="0.25" stop-color="rgb(189,255,240)"/><stop offset="0.45" stop-color="rgb(229,255,245)"/><stop offset="0.6" stop-color="rgb(255,253,243)"/><stop offset="0.8" stop-color="rgb(255,224,205)"/><stop offset="1.0" stop-color="rgb(255,192,168)"/></linearGradient>
<rect x="537" y="822" width="268" height="4" shape-rendering="crispEdges" fill="url(#cg16)"/>
<linearGradient id="cg17" x1="0" x2="1" y1="0" y2="0"><stop offset="0" stop-color="rgb(159,255,238)"/><stop offset="0.25" stop-color="rgb(191,255,242)"/><stop offset="0.45" stop-color="rgb(231,255,247)"/><stop offset="0.6" stop-color="rgb(255,252,244)"/><stop offset="0.8" stop-color="rgb(255,221,204)"/><stop offset="1.0" stop-color="rgb(255,189,168)"/></linearGradient>
<rect x="537" y="826" width="268" height="4" shape-rendering="crispEdges" fill="url(#cg17)"/>
<linearGradient id="cg18" x1="0" x2="1" y1="0" y2="0"><stop offset="0" stop-color="rgb(161,255,241)"/><stop offset="0.25" stop-color="rgb(193,255,245)"/><stop offset="0.45" stop-color="rgb(233,255,248)"/><stop offset="0.6" stop-color="rgb(255,251,244)"/><stop offset="0.8" stop-color="rgb(255,219,204)"/><stop offset="1.0" stop-color="rgb(255,187,168)"/></linearGradient>
<rect x="537" y="830" width="268" height="4" shape-rendering="crispEdges" fill="url(#cg18)"/>
<linearGradient id="cg19" x1="0" x2="1" y1="0" y2="0"><stop offset="0" stop-color="rgb(163,255,245)"/><stop offset="0.25" stop-color="rgb(195,255,247)"/><stop offset="0.45" stop-color="rgb(235,255,250)"/><stop offset="0.6" stop-color="rgb(255,250,245)"/><stop offset="0.8" stop-color="rgb(255,216,203)"/><stop offset="1.0" stop-color="rgb(255,184,168)"/></linearGradient>
<rect x="537" y="834" width="268" height="4" shape-rendering="crispEdges" fill="url(#cg19)"/>
<linearGradient id="cg20" x1="0" x2="1" y1="0" y2="0"><stop offset="0" stop-color="rgb(164,255,248)"/><stop offset="0.25" stop-color="rgb(196,255,250)"/><stop offset="0.45" stop-color="rgb(236,255,252)"/><stop offset="0.6" stop-color="rgb(255,250,246)"/><stop offset="0.8" stop-color="rgb(255,213,202)"/><stop offset="1.0" stop-color="rgb(255,181,168)"/></linearGradient>
<rect x="537" y="838" width="268" height="4" shape-rendering="crispEdges" fill="url(#cg20)"/>
<linearGradient id="cg21" x1="0" x2="1" y1="0" y2="0"><stop offset="0" stop-color="rgb(166,255,252)"/><stop offset="0.25" stop-color="rgb(198,255,252)"/><stop offset="0.45" stop-color="rgb(238,255,253)"/><stop offset="0.6" stop-color="rgb(255,249,247)"/><stop offset="0.8" stop-color="rgb(255,211,201)"/><stop offset="1.0" stop-color="rgb(255,179,168)"/></linearGradient>
<rect x="537" y="842" width="268" height="4" shape-rendering="crispEdges" fill="url(#cg21)"/>
<linearGradient id="cg22" x1="0" x2="1" y1="0" y2="0"><stop offset="0" stop-color="rgb(168,255,255)"/><stop offset="0.25" stop-color="rgb(200,255,255)"/><stop offset="0.45" stop-color="rgb(240,255,255)"/><stop offset="0.6" stop-color="rgb(255,248,248)"/><stop offset="0.8" stop-color="rgb(255,208,200)"/><stop offset="1.0" stop-color="rgb(255,176,168)"/></linearGradient>
<rect x="537" y="846" width="268" height="4" shape-rendering="crispEdges" fill="url(#cg22)"/>
<linearGradient id="cg23" x1="0" x2="1" y1="0" y2="0"><stop offset="0" stop-color="rgb(168,252,255)"/><stop offset="0.25" stop-color="rgb(201,252,255)"/><stop offset="0.45" stop-color="rgb(241,253,255)"/><stop offset="0.6" stop-color="rgb(255,245,247)"/><stop offset="0.8" stop-color="rgb(255,206,200)"/><stop offset="1.0" stop-color="rgb(255,174,169)"/></linearGradient>
<rect x="537" y="850" width="268" height="4" shape-rendering="crispEdges" fill="url(#cg23)"/>
<linearGradient id="cg24" x1="0" x2="1" y1="0" y2="0"><stop offset="0" stop-color="rgb(168,248,255)"/><stop offset="0.25" stop-color="rgb(202,250,255)"/><stop offset="0.45" stop-color="rgb(242,252,255)"/><stop offset="0.6" stop-color="rgb(255,243,246)"/><stop offset="0.8" stop-color="rgb(255,204,200)"/><stop offset="1.0" stop-color="rgb(255,172,170)"/></linearGradient>
<rect x="537" y="854" width="268" height="4" shape-rendering="crispEdges" fill="url(#cg24)"/>
<linearGradient id="cg25" x1="0" x2="1" y1="0" y2="0"><stop offset="0" stop-color="rgb(168,245,255)"/><stop offset="0.25" stop-color="rgb(203,247,255)"/><stop offset="0.45" stop-color="rgb(243,250,255)"/><stop offset="0.6" stop-color="rgb(255,240,245)"/><stop offset="0.8" stop-color="rgb(255,203,200)"/><stop offset="1.0" stop-color="rgb(255,171,171)"/></linearGradient>
<rect x="537" y="858" width="268" height="4" shape-rendering="crispEdges" fill="url(#cg25)"/>
<linearGradient id="cg26" x1="0" x2="1" y1="0" y2="0"><stop offset="0" stop-color="rgb(168,241,255)"/><stop offset="0.25" stop-color="rgb(204,245,255)"/><stop offset="0.45" stop-color="rgb(244,248,255)"/><stop offset="0.6" stop-color="rgb(255,237,244)"/><stop offset="0.8" stop-color="rgb(255,201,200)"/><stop offset="1.0" stop-color="rgb(255,169,172)"/></linearGradient>
<rect x="537" y="862" width="268" height="4" shape-rendering="crispEdges" fill="url(#cg26)"/>
<linearGradient id="cg27" x1="0" x2="1" y1="0" y2="0"><stop offset="0" stop-color="rgb(168,238,255)"/><stop offset="0.25" stop-color="rgb(204,242,255)"/><stop offset="0.45" stop-color="rgb(244,247,255)"/><stop offset="0.6" stop-color="rgb(255,235,244)"/><stop offset="0.8" stop-color="rgb(255,199,200)"/><stop offset="1.0" stop-color="rgb(255,167,172)"/></linearGradient>
<rect x="537" y="866" width="268" height="4" shape-rendering="crispEdges" fill="url(#cg27)"/>
<linearGradient id="cg28" x1="0" x2="1" y1="0" y2="0"><stop offset="0" stop-color="rgb(168,234,255)"/><stop offset="0.25" stop-color="rgb(205,240,255)"/><stop offset="0.45" stop-color="rgb(245,245,255)"/><stop offset="0.6" stop-color="rgb(255,232,243)"/><stop offset="0.8" stop-color="rgb(255,197,200)"/><stop offset="1.0" stop-color="rgb(255,165,173)"/></linearGradient>
<rect x="537" y="870" width="268" height="4" shape-rendering="crispEdges" fill="url(#cg28)"/>
<linearGradient id="cg29" x1="0" x2="1" y1="0" y2="0"><stop offset="0" stop-color="rgb(168,231,255)"/><stop offset="0.25" stop-color="rgb(206,237,255)"/><stop offset="0.45" stop-color="rgb(246,243,255)"/><stop offset="0.6" stop-color="rgb(255,229,242)"/><stop offset="0.8" stop-color="rgb(255,196,200)"/><stop offset="1.0" stop-color="rgb(255,164,174)"/></linearGradient>
<rect x="537" y="874" width="268" height="4" shape-rendering="crispEdges" fill="url(#cg29)"/>
<linearGradient id="cg30" x1="0" x2="1" y1="0" y2="0"><stop offset="0" stop-color="rgb(168,227,255)"/><stop offset="0.25" stop-color="rgb(207,235,255)"/><stop offset="0.45" stop-color="rgb(247,242,255)"/><stop offset="0.6" stop-color="rgb(255,227,241)"/><stop offset="0.8" stop-color="rgb(255,194,200)"/><stop offset="1.0" stop-color="rgb(255,162,175)"/></linearGradient>
<rect x="537" y="878" width="268" height="4" shape-rendering="crispEdges" fill="url(#cg30)"/>
<linearGradient id="cg31" x1="0" x2="1" y1="0" y2="0"><stop offset="0" stop-color="rgb(168,224,255)"/><stop offset="0.25" stop-color="rgb(208,232,255)"/><stop offset="0.45" stop-color="rgb(248,240,255)"/><stop offset="0.6" stop-color="rgb(255,224,240)"/><stop offset="0.8" stop-color="rgb(255,192,200)"/><stop offset="1.0" stop-color="rgb(255,160,176)"/></linearGradient>
<rect x="537" y="882" width="268" height="4" shape-rendering="crispEdges" fill="url(#cg31)"/>
<linearGradient id="cg32" x1="0" x2="1" y1="0" y2="0"><stop offset="0" stop-color="rgb(168,222,255)"/><stop offset="0.25" stop-color="rgb(208,230,255)"/><stop offset="0.45" stop-color="rgb(247,237,255)"/><stop offset="0.6" stop-color="rgb(255,222,240)"/><stop offset="0.8" stop-color="rgb(255,190,201)"/><stop offset="1.0" stop-color="rgb(255,159,177)"/></linearGradient>
<rect x="537" y="886" width="268" height="4" shape-rendering="crispEdges" fill="url(#cg32)"/>
<linearGradient id="cg33" x1="0" x2="1" y1="0" y2="0"><stop offset="0" stop-color="rgb(168,219,255)"/><stop offset="0.25" stop-color="rgb(208,227,255)"/><stop offset="0.45" stop-color="rgb(247,234,255)"/><stop offset="0.6" stop-color="rgb(255,219,240)"/><stop offset="0.8" stop-color="rgb(255,188,201)"/><stop offset="1.0" stop-color="rgb(255,158,177)"/></linearGradient>
<rect x="537" y="890" width="268" height="4" shape-rendering="crispEdges" fill="url(#cg33)"/>
<linearGradient id="cg34" x1="0" x2="1" y1="0" y2="0"><stop offset="0" stop-color="rgb(168,217,255)"/><stop offset="0.25" stop-color="rgb(208,225,255)"/><stop offset="0.45" stop-color="rgb(246,231,255)"/><stop offset="0.6" stop-color="rgb(255,217,240)"/><stop offset="0.8" stop-color="rgb(255,187,202)"/><stop offset="1.0" stop-color="rgb(255,156,178)"/></linearGradient>
<rect x="537" y="894" width="268" height="4" shape-rendering="crispEdges" fill="url(#cg34)"/>
<linearGradient id="cg35" x1="0" x2="1" y1="0" y2="0"><stop offset="0" stop-color="rgb(168,215,255)"/><stop offset="0.25" stop-color="rgb(208,223,255)"/><stop offset="0.45" stop-color="rgb(246,228,255)"/><stop offset="0.6" stop-color="rgb(255,215,240)"/><stop offset="0.8" stop-color="rgb(255,185,202)"/><stop offset="1.0" stop-color="rgb(255,155,178)"/></linearGradient>
<rect x="537" y="898" width="268" height="4" shape-rendering="crispEdges" fill="url(#cg35)"/>
<linearGradient id="cg36" x1="0" x2="1" y1="0" y2="0"><stop offset="0" stop-color="rgb(168,212,255)"/><stop offset="0.25" stop-color="rgb(208,220,255)"/><stop offset="0.45" stop-color="rgb(245,225,255)"/><stop offset="0.6" stop-color="rgb(255,212,240)"/><stop offset="0.8" stop-color="rgb(255,183,203)"/><stop offset="1.0" stop-color="rgb(255,154,179)"/></linearGradient>
<rect x="537" y="902" width="268" height="4" shape-rendering="crispEdges" fill="url(#cg36)"/>
<linearGradient id="cg37" x1="0" x2="1" y1="0" y2="0"><stop offset="0" stop-color="rgb(168,210,255)"/><stop offset="0.25" stop-color="rgb(208,218,255)"/><stop offset="0.45" stop-color="rgb(244,222,255)"/><stop offset="0.6" stop-color="rgb(255,210,240)"/><stop offset="0.8" stop-color="rgb(255,181,204)"/><stop offset="1.0" stop-color="rgb(255,153,180)"/></linearGradient>
<rect x="537" y="906" width="268" height="4" shape-rendering="crispEdges" fill="url(#cg37)"/>
<linearGradient id="cg38" x1="0" x2="1" y1="0" y2="0"><stop offset="0" stop-color="rgb(168,207,255)"/><stop offset="0.25" stop-color="rgb(208,215,255)"/><stop offset="0.45" stop-color="rgb(244,219,255)"/><stop offset="0.6" stop-color="rgb(255,207,240)"/><stop offset="0.8" stop-color="rgb(255,180,204)"/><stop offset="1.0" stop-color="rgb(255,152,180)"/></linearGradient>
<rect x="537" y="910" width="268" height="4" shape-rendering="crispEdges" fill="url(#cg38)"/>
<linearGradient id="cg39" x1="0" x2="1" y1="0" y2="0"><stop offset="0" stop-color="rgb(168,205,255)"/><stop offset="0.25" stop-color="rgb(208,213,255)"/><stop offset="0.45" stop-color="rgb(243,216,255)"/><stop offset="0.6" stop-color="rgb(255,205,240)"/><stop offset="0.8" stop-color="rgb(255,178,205)"/><stop offset="1.0" stop-color="rgb(255,151,181)"/></linearGradient>
<rect x="537" y="914" width="268" height="4" shape-rendering="crispEdges" fill="url(#cg39)"/>
<linearGradient id="cg40" x1="0" x2="1" y1="0" y2="0"><stop offset="0" stop-color="rgb(168,203,255)"/><stop offset="0.25" stop-color="rgb(208,211,255)"/><stop offset="0.45" stop-color="rgb(243,213,255)"/><stop offset="0.6" stop-color="rgb(255,203,240)"/><stop offset="0.8" stop-color="rgb(255,176,205)"/><stop offset="1.0" stop-color="rgb(255,149,181)"/></linearGradient>
<rect x="537" y="918" width="268" height="4" shape-rendering="crispEdges" fill="url(#cg40)"/>
<linearGradient id="cg41" x1="0" x2="1" y1="0" y2="0"><stop offset="0" stop-color="rgb(168,200,255)"/><stop offset="0.25" stop-color="rgb(208,208,255)"/><stop offset="0.45" stop-color="rgb(242,210,255)"/><stop offset="0.6" stop-color="rgb(255,200,240)"/><stop offset="0.8" stop-color="rgb(255,174,206)"/><stop offset="1.0" stop-color="rgb(255,148,182)"/></linearGradient>
<rect x="537" y="922" width="268" height="4" shape-rendering="crispEdges" fill="url(#cg41)"/>
<linearGradient id="cg42" x1="0" x2="1" y1="0" y2="0"><stop offset="0" stop-color="rgb(168,198,255)"/><stop offset="0.25" stop-color="rgb(208,206,255)"/><stop offset="0.45" stop-color="rgb(241,207,255)"/><stop offset="0.6" stop-color="rgb(255,198,240)"/><stop offset="0.8" stop-color="rgb(255,172,207)"/><stop offset="1.0" stop-color="rgb(255,147,183)"/></linearGradient>
<rect x="537" y="926" width="268" height="4" shape-rendering="crispEdges" fill="url(#cg42)"/>
<linearGradient id="cg43" x1="0" x2="1" y1="0" y2="0"><stop offset="0" stop-color="rgb(168,196,255)"/><stop offset="0.25" stop-color="rgb(208,204,255)"/><stop offset="0.45" stop-color="rgb(241,204,255)"/><stop offset="0.6" stop-color="rgb(255,196,240)"/><stop offset="0.8" stop-color="rgb(255,171,207)"/><stop offset="1.0" stop-color="rgb(255,146,183)"/></linearGradient>
<rect x="537" y="930" width="268" height="4" shape-rendering="crispEdges" fill="url(#cg43)"/>
<linearGradient id="cg44" x1="0" x2="1" y1="0" y2="0"><stop offset="0" stop-color="rgb(168,193,255)"/><stop offset="0.25" stop-color="rgb(208,201,255)"/><stop offset="0.45" stop-color="rgb(240,201,255)"/><stop offset="0.6" stop-color="rgb(255,193,240)"/><stop offset="0.8" stop-color="rgb(255,169,208)"/><stop offset="1.0" stop-color="rgb(255,145,184)"/></linearGradient>
<rect x="537" y="934" width="268" height="2" shape-rendering="crispEdges" fill="url(#cg44)"/>
<clipPath id="cclip"><rect x="537" y="758" width="267.5" height="177.4"/></clipPath>
<polyline clip-path="url(#cclip)" points="1165.23,636.55 1136.31,647.24 1108.68,657.98 1082.25,668.72 1056.95,679.42 1032.35,678.15 1009.25,687.74 987.20,697.18 966.16,706.47 946.07,715.58 926.89,724.52 908.57,733.27 891.05,741.83 874.31,750.21 858.29,758.39 842.96,766.37 828.27,774.17 814.20,781.77 800.72,789.18 787.79,796.41 775.38,803.45 763.46,810.31 752.02,816.99 741.02,823.50 730.44,829.83 720.27,836.01 710.47,842.02 701.04,847.87 691.96,853.57 683.20,859.12 674.76,864.53 666.61,869.79 658.75,874.92 651.16,879.91 643.82,884.78 636.74,889.52 629.89,894.14 623.26,898.64 616.84,903.02 610.64,907.30 604.63,911.47 598.80,915.53 593.16,919.49 587.69,923.36 582.39,927.13 577.24,930.81 572.24,934.40 567.40,937.90 562.69,941.32 558.11,944.66 553.67,947.92 549.35,951.10 545.15,954.21 541.07,957.25 537.09,960.21 533.22,963.11" fill="none" stroke="#000" stroke-width="3"/>
<rect x="663" y="838.3" width="14" height="14" fill="#fff" stroke="#000" stroke-width="1.8"/>
<g clip-path="url(#cclip)">
<circle cx="638.9" cy="936.5" r="5" fill="#000"/>
<circle cx="754.3" cy="812.3" r="4.8" fill="#111"/>
<circle cx="765.2" cy="800.8" r="4.8" fill="#111"/>
<circle cx="764.2" cy="803" r="4.6" fill="#bdbdbd" stroke="#111" stroke-width="0.8"/>
<circle cx="762.3" cy="805.3" r="4.5" fill="#dedede" stroke="#222" stroke-width="0.8"/>
<circle cx="751.2" cy="815.2" r="4.5" fill="#fff" stroke="#222" stroke-width="0.8"/>
</g>
<rect x="537" y="758" width="267.5" height="177.4" fill="none" stroke="#8a8a8a" stroke-width="2"/>
<line x1="530" y1="809.40" x2="536" y2="809.40" stroke="#dedede" stroke-width="1.5"/>
<text x="529.70" y="814.70" font-size="15.12" text-anchor="end" fill="#dedede" stroke="#dedede" stroke-width="0.2">0.34</text>
<line x1="530" y1="879.70" x2="536" y2="879.70" stroke="#dedede" stroke-width="1.5"/>
<text x="529.70" y="885.00" font-size="15.12" text-anchor="end" fill="#dedede" stroke="#dedede" stroke-width="0.2">0.32</text>
<line x1="549.30" y1="936" x2="549.30" y2="942" stroke="#dedede" stroke-width="1.5"/>
<text x="549.30" y="957.20" font-size="15.41" text-anchor="middle" fill="#dedede" stroke="#dedede" stroke-width="0.2">0.29</text>
<line x1="602.70" y1="936" x2="602.70" y2="942" stroke="#dedede" stroke-width="1.5"/>
<text x="602.70" y="957.20" font-size="15.41" text-anchor="middle" fill="#dedede" stroke="#dedede" stroke-width="0.2">0.3</text>
<line x1="656.10" y1="936" x2="656.10" y2="942" stroke="#dedede" stroke-width="1.5"/>
<text x="656.10" y="957.20" font-size="15.41" text-anchor="middle" fill="#dedede" stroke="#dedede" stroke-width="0.2">0.31</text>
<line x1="709.50" y1="936" x2="709.50" y2="942" stroke="#dedede" stroke-width="1.5"/>
<text x="709.50" y="957.20" font-size="15.41" text-anchor="middle" fill="#dedede" stroke="#dedede" stroke-width="0.2">0.32</text>
<line x1="762.90" y1="936" x2="762.90" y2="942" stroke="#dedede" stroke-width="1.5"/>
<text x="762.90" y="957.20" font-size="15.41" text-anchor="middle" fill="#dedede" stroke="#dedede" stroke-width="0.2">0.33</text>
<rect x="815.5" y="728" width="1095.5" height="242.7" fill="none" stroke="#f0f0f0" stroke-width="1.5" stroke-dasharray="1.4 2.9"/>
<rect x="816" y="728.6" width="901.3" height="13" fill="#2e2e2e"/>
<rect x="816" y="741.6" width="901.3" height="12.80" fill="#121212"/>
<rect x="816" y="728.6" width="11.2" height="25.80" fill="#000"/>
<text x="941.30" y="746.60" font-size="14.53" textLength="6.71" lengthAdjust="spacingAndGlyphs" fill="#f0f0f0" stroke="#f0f0f0" stroke-width="0.2">0</text>
<text x="1012.17" y="746.60" font-size="14.53" textLength="13.42" lengthAdjust="spacingAndGlyphs" fill="#f0f0f0" stroke="#f0f0f0" stroke-width="0.2">10</text>
<text x="1083.04" y="746.60" font-size="14.53" textLength="13.42" lengthAdjust="spacingAndGlyphs" fill="#f0f0f0" stroke="#f0f0f0" stroke-width="0.2">20</text>
<text x="1153.91" y="746.60" font-size="14.53" textLength="13.42" lengthAdjust="spacingAndGlyphs" fill="#f0f0f0" stroke="#f0f0f0" stroke-width="0.2">30</text>
<text x="1224.78" y="746.60" font-size="14.53" textLength="13.42" lengthAdjust="spacingAndGlyphs" fill="#f0f0f0" stroke="#f0f0f0" stroke-width="0.2">40</text>
<text x="1295.65" y="746.60" font-size="14.53" textLength="13.42" lengthAdjust="spacingAndGlyphs" fill="#f0f0f0" stroke="#f0f0f0" stroke-width="0.2">50</text>
<text x="1366.52" y="746.60" font-size="14.53" textLength="13.42" lengthAdjust="spacingAndGlyphs" fill="#f0f0f0" stroke="#f0f0f0" stroke-width="0.2">60</text>
<text x="1437.39" y="746.60" font-size="14.53" textLength="13.42" lengthAdjust="spacingAndGlyphs" fill="#f0f0f0" stroke="#f0f0f0" stroke-width="0.2">70</text>
<text x="1508.26" y="746.60" font-size="14.53" textLength="13.42" lengthAdjust="spacingAndGlyphs" fill="#f0f0f0" stroke="#f0f0f0" stroke-width="0.2">80</text>
<text x="1579.13" y="746.60" font-size="14.53" textLength="13.42" lengthAdjust="spacingAndGlyphs" fill="#f0f0f0" stroke="#f0f0f0" stroke-width="0.2">90</text>
<text x="1650.00" y="746.60" font-size="14.53" textLength="20.13" lengthAdjust="spacingAndGlyphs" fill="#f0f0f0" stroke="#f0f0f0" stroke-width="0.2">100</text>
<rect x="816" y="754.40" width="901.3" height="24.66" fill="#414141"/>
<rect x="816" y="754.40" width="11.2" height="24.66" fill="#2a2a2a"/>
<text x="830.80" y="772.60" font-size="15.99" textLength="47.00" lengthAdjust="spacingAndGlyphs" fill="#f2f2f2" stroke="#f2f2f2" stroke-width="0.2">x: CIE31</text>
<text x="941.30" y="772.60" font-size="15.99" textLength="40.59" lengthAdjust="spacingAndGlyphs" fill="#f2f2f2" stroke="#f2f2f2" stroke-width="0.2">0.3070</text>
<text x="1012.17" y="772.60" font-size="15.99" textLength="40.59" lengthAdjust="spacingAndGlyphs" fill="#f2f2f2" stroke="#f2f2f2" stroke-width="0.2">0.3285</text>
<text x="1083.04" y="772.60" font-size="15.99" textLength="40.59" lengthAdjust="spacingAndGlyphs" fill="#f2f2f2" stroke="#f2f2f2" stroke-width="0.2">0.3304</text>
<text x="1153.91" y="772.60" font-size="15.99" textLength="40.59" lengthAdjust="spacingAndGlyphs" fill="#f2f2f2" stroke="#f2f2f2" stroke-width="0.2">0.3306</text>
<text x="1224.78" y="772.60" font-size="15.99" textLength="40.59" lengthAdjust="spacingAndGlyphs" fill="#f2f2f2" stroke="#f2f2f2" stroke-width="0.2">0.3307</text>
<text x="1295.65" y="772.60" font-size="15.99" textLength="40.59" lengthAdjust="spacingAndGlyphs" fill="#f2f2f2" stroke="#f2f2f2" stroke-width="0.2">0.3307</text>
<text x="1366.52" y="772.60" font-size="15.99" textLength="40.59" lengthAdjust="spacingAndGlyphs" fill="#f2f2f2" stroke="#f2f2f2" stroke-width="0.2">0.3307</text>
<text x="1437.39" y="772.60" font-size="15.99" textLength="40.59" lengthAdjust="spacingAndGlyphs" fill="#f2f2f2" stroke="#f2f2f2" stroke-width="0.2">0.3307</text>
<text x="1508.26" y="772.60" font-size="15.99" textLength="40.59" lengthAdjust="spacingAndGlyphs" fill="#f2f2f2" stroke="#f2f2f2" stroke-width="0.2">0.3305</text>
<text x="1579.13" y="772.60" font-size="15.99" textLength="40.59" lengthAdjust="spacingAndGlyphs" fill="#f2f2f2" stroke="#f2f2f2" stroke-width="0.2">0.3300</text>
<text x="1650.00" y="772.60" font-size="15.99" textLength="40.59" lengthAdjust="spacingAndGlyphs" fill="#f2f2f2" stroke="#f2f2f2" stroke-width="0.2">0.3279</text>
<rect x="816" y="779.06" width="901.3" height="24.66" fill="#7f7f7f"/>
<rect x="816" y="779.06" width="11.2" height="24.66" fill="#1f1f1f"/>
<text x="830.80" y="797.26" font-size="15.99" textLength="47.00" lengthAdjust="spacingAndGlyphs" fill="#f2f2f2" stroke="#f2f2f2" stroke-width="0.2">y: CIE31</text>
<text x="941.30" y="797.26" font-size="15.99" textLength="40.59" lengthAdjust="spacingAndGlyphs" fill="#f2f2f2" stroke="#f2f2f2" stroke-width="0.2">0.3034</text>
<text x="1012.17" y="797.26" font-size="15.99" textLength="40.59" lengthAdjust="spacingAndGlyphs" fill="#f2f2f2" stroke="#f2f2f2" stroke-width="0.2">0.3385</text>
<text x="1083.04" y="797.26" font-size="15.99" textLength="40.59" lengthAdjust="spacingAndGlyphs" fill="#f2f2f2" stroke="#f2f2f2" stroke-width="0.2">0.3414</text>
<text x="1153.91" y="797.26" font-size="15.99" textLength="40.59" lengthAdjust="spacingAndGlyphs" fill="#f2f2f2" stroke="#f2f2f2" stroke-width="0.2">0.3418</text>
<text x="1224.78" y="797.26" font-size="15.99" textLength="40.59" lengthAdjust="spacingAndGlyphs" fill="#f2f2f2" stroke="#f2f2f2" stroke-width="0.2">0.3418</text>
<text x="1295.65" y="797.26" font-size="15.99" textLength="40.59" lengthAdjust="spacingAndGlyphs" fill="#f2f2f2" stroke="#f2f2f2" stroke-width="0.2">0.3418</text>
<text x="1366.52" y="797.26" font-size="15.99" textLength="40.59" lengthAdjust="spacingAndGlyphs" fill="#f2f2f2" stroke="#f2f2f2" stroke-width="0.2">0.3417</text>
<text x="1437.39" y="797.26" font-size="15.99" textLength="40.59" lengthAdjust="spacingAndGlyphs" fill="#f2f2f2" stroke="#f2f2f2" stroke-width="0.2">0.3416</text>
<text x="1508.26" y="797.26" font-size="15.99" textLength="40.59" lengthAdjust="spacingAndGlyphs" fill="#f2f2f2" stroke="#f2f2f2" stroke-width="0.2">0.3412</text>
<text x="1579.13" y="797.26" font-size="15.99" textLength="40.59" lengthAdjust="spacingAndGlyphs" fill="#f2f2f2" stroke="#f2f2f2" stroke-width="0.2">0.3406</text>
<text x="1650.00" y="797.26" font-size="15.99" textLength="40.59" lengthAdjust="spacingAndGlyphs" fill="#f2f2f2" stroke="#f2f2f2" stroke-width="0.2">0.3379</text>
<rect x="816" y="803.73" width="901.3" height="24.66" fill="#414141"/>
<rect x="816" y="803.73" width="11.2" height="24.66" fill="#2a2a2a"/>
<text x="830.80" y="821.93" font-size="15.99" textLength="8.50" lengthAdjust="spacingAndGlyphs" fill="#f2f2f2" stroke="#f2f2f2" stroke-width="0.2">Y</text>
<text x="941.30" y="821.93" font-size="15.99" textLength="40.59" lengthAdjust="spacingAndGlyphs" fill="#f2f2f2" stroke="#f2f2f2" stroke-width="0.2">0.5234</text>
<text x="1012.17" y="821.93" font-size="15.99" textLength="40.59" lengthAdjust="spacingAndGlyphs" fill="#f2f2f2" stroke="#f2f2f2" stroke-width="0.2">4.4241</text>
<text x="1083.04" y="821.93" font-size="15.99" textLength="47.97" lengthAdjust="spacingAndGlyphs" fill="#f2f2f2" stroke="#f2f2f2" stroke-width="0.2">17.3135</text>
<text x="1153.91" y="821.93" font-size="15.99" textLength="47.97" lengthAdjust="spacingAndGlyphs" fill="#f2f2f2" stroke="#f2f2f2" stroke-width="0.2">40.9290</text>
<text x="1224.78" y="821.93" font-size="15.99" textLength="47.97" lengthAdjust="spacingAndGlyphs" fill="#f2f2f2" stroke="#f2f2f2" stroke-width="0.2">76.1907</text>
<text x="1295.65" y="821.93" font-size="15.99" textLength="55.35" lengthAdjust="spacingAndGlyphs" fill="#f2f2f2" stroke="#f2f2f2" stroke-width="0.2">125.3891</text>
<text x="1366.52" y="821.93" font-size="15.99" textLength="55.35" lengthAdjust="spacingAndGlyphs" fill="#f2f2f2" stroke="#f2f2f2" stroke-width="0.2">182.8979</text>
<text x="1437.39" y="821.93" font-size="15.99" textLength="55.35" lengthAdjust="spacingAndGlyphs" fill="#f2f2f2" stroke="#f2f2f2" stroke-width="0.2">256.6760</text>
<text x="1508.26" y="821.93" font-size="15.99" textLength="55.35" lengthAdjust="spacingAndGlyphs" fill="#f2f2f2" stroke="#f2f2f2" stroke-width="0.2">352.7091</text>
<text x="1579.13" y="821.93" font-size="15.99" textLength="55.35" lengthAdjust="spacingAndGlyphs" fill="#f2f2f2" stroke="#f2f2f2" stroke-width="0.2">471.5480</text>
<text x="1650.00" y="821.93" font-size="15.99" textLength="55.35" lengthAdjust="spacingAndGlyphs" fill="#f2f2f2" stroke="#f2f2f2" stroke-width="0.2">604.2654</text>
<rect x="816" y="828.39" width="901.3" height="24.66" fill="#7f7f7f"/>
<rect x="816" y="828.39" width="11.2" height="24.66" fill="#1f1f1f"/>
<text x="830.80" y="846.59" font-size="15.99" textLength="49.50" lengthAdjust="spacingAndGlyphs" fill="#f2f2f2" stroke="#f2f2f2" stroke-width="0.2">Target Y</text>
<text x="941.30" y="846.59" font-size="15.99" textLength="40.59" lengthAdjust="spacingAndGlyphs" fill="#f2f2f2" stroke="#f2f2f2" stroke-width="0.2">0.5234</text>
<text x="1012.17" y="846.59" font-size="15.99" textLength="40.59" lengthAdjust="spacingAndGlyphs" fill="#f2f2f2" stroke="#f2f2f2" stroke-width="0.2">4.4990</text>
<text x="1083.04" y="846.59" font-size="15.99" textLength="47.97" lengthAdjust="spacingAndGlyphs" fill="#f2f2f2" stroke="#f2f2f2" stroke-width="0.2">18.0266</text>
<text x="1153.91" y="846.59" font-size="15.99" textLength="47.97" lengthAdjust="spacingAndGlyphs" fill="#f2f2f2" stroke="#f2f2f2" stroke-width="0.2">42.6206</text>
<text x="1224.78" y="846.59" font-size="15.99" textLength="47.97" lengthAdjust="spacingAndGlyphs" fill="#f2f2f2" stroke="#f2f2f2" stroke-width="0.2">80.9470</text>
<text x="1295.65" y="846.59" font-size="15.99" textLength="55.35" lengthAdjust="spacingAndGlyphs" fill="#f2f2f2" stroke="#f2f2f2" stroke-width="0.2">133.0567</text>
<text x="1366.52" y="846.59" font-size="15.99" textLength="55.35" lengthAdjust="spacingAndGlyphs" fill="#f2f2f2" stroke="#f2f2f2" stroke-width="0.2">196.7619</text>
<text x="1437.39" y="846.59" font-size="15.99" textLength="55.35" lengthAdjust="spacingAndGlyphs" fill="#f2f2f2" stroke="#f2f2f2" stroke-width="0.2">274.2941</text>
<text x="1508.26" y="846.59" font-size="15.99" textLength="55.35" lengthAdjust="spacingAndGlyphs" fill="#f2f2f2" stroke="#f2f2f2" stroke-width="0.2">370.0531</text>
<text x="1579.13" y="846.59" font-size="15.99" textLength="55.35" lengthAdjust="spacingAndGlyphs" fill="#f2f2f2" stroke="#f2f2f2" stroke-width="0.2">481.6554</text>
<text x="1650.00" y="846.59" font-size="15.99" textLength="55.35" lengthAdjust="spacingAndGlyphs" fill="#f2f2f2" stroke="#f2f2f2" stroke-width="0.2">604.2654</text>
<rect x="816" y="853.05" width="901.3" height="24.66" fill="#414141"/>
<rect x="816" y="853.05" width="11.2" height="24.66" fill="#2a2a2a"/>
<text x="830.80" y="871.25" font-size="15.99" textLength="102.00" lengthAdjust="spacingAndGlyphs" fill="#f2f2f2" stroke="#f2f2f2" stroke-width="0.2">Gamma Log/Log</text>
<text x="941.30" y="871.25" font-size="15.99" textLength="40.59" lengthAdjust="spacingAndGlyphs" fill="#f2f2f2" stroke="#f2f2f2" stroke-width="0.2">0.7656</text>
<text x="1012.17" y="871.25" font-size="15.99" textLength="40.59" lengthAdjust="spacingAndGlyphs" fill="#f2f2f2" stroke="#f2f2f2" stroke-width="0.2">2.1536</text>
<text x="1083.04" y="871.25" font-size="15.99" textLength="40.59" lengthAdjust="spacingAndGlyphs" fill="#f2f2f2" stroke="#f2f2f2" stroke-width="0.2">2.2073</text>
<text x="1153.91" y="871.25" font-size="15.99" textLength="40.59" lengthAdjust="spacingAndGlyphs" fill="#f2f2f2" stroke="#f2f2f2" stroke-width="0.2">2.2240</text>
<text x="1224.78" y="871.25" font-size="15.99" textLength="40.59" lengthAdjust="spacingAndGlyphs" fill="#f2f2f2" stroke="#f2f2f2" stroke-width="0.2">2.2600</text>
<text x="1295.65" y="871.25" font-size="15.99" textLength="40.59" lengthAdjust="spacingAndGlyphs" fill="#f2f2f2" stroke="#f2f2f2" stroke-width="0.2">2.2817</text>
<text x="1366.52" y="871.25" font-size="15.99" textLength="40.59" lengthAdjust="spacingAndGlyphs" fill="#f2f2f2" stroke="#f2f2f2" stroke-width="0.2">2.3395</text>
<text x="1437.39" y="871.25" font-size="15.99" textLength="40.59" lengthAdjust="spacingAndGlyphs" fill="#f2f2f2" stroke="#f2f2f2" stroke-width="0.2">2.3818</text>
<text x="1508.26" y="871.25" font-size="15.99" textLength="40.59" lengthAdjust="spacingAndGlyphs" fill="#f2f2f2" stroke="#f2f2f2" stroke-width="0.2">2.4127</text>
<text x="1579.13" y="871.25" font-size="15.99" textLength="40.59" lengthAdjust="spacingAndGlyphs" fill="#f2f2f2" stroke="#f2f2f2" stroke-width="0.2">2.4034</text>
<text x="1650.00" y="871.25" font-size="15.99" textLength="40.59" lengthAdjust="spacingAndGlyphs" fill="#f2f2f2" stroke="#f2f2f2" stroke-width="0.2">2.1981</text>
<rect x="816" y="877.71" width="901.3" height="24.66" fill="#7f7f7f"/>
<rect x="816" y="877.71" width="11.2" height="24.66" fill="#1f1f1f"/>
<text x="830.80" y="895.91" font-size="15.99" textLength="24.20" lengthAdjust="spacingAndGlyphs" fill="#f2f2f2" stroke="#f2f2f2" stroke-width="0.2">CCT</text>
<text x="941.30" y="895.91" font-size="15.99" textLength="62.73" lengthAdjust="spacingAndGlyphs" fill="#f2f2f2" stroke="#f2f2f2" stroke-width="0.2">7137.0000</text>
<text x="1012.17" y="895.91" font-size="15.99" textLength="62.73" lengthAdjust="spacingAndGlyphs" fill="#f2f2f2" stroke="#f2f2f2" stroke-width="0.2">5674.0000</text>
<text x="1083.04" y="895.91" font-size="15.99" textLength="62.73" lengthAdjust="spacingAndGlyphs" fill="#f2f2f2" stroke="#f2f2f2" stroke-width="0.2">5589.0000</text>
<text x="1153.91" y="895.91" font-size="15.99" textLength="62.73" lengthAdjust="spacingAndGlyphs" fill="#f2f2f2" stroke="#f2f2f2" stroke-width="0.2">5578.0000</text>
<text x="1224.78" y="895.91" font-size="15.99" textLength="62.73" lengthAdjust="spacingAndGlyphs" fill="#f2f2f2" stroke="#f2f2f2" stroke-width="0.2">5575.0000</text>
<text x="1295.65" y="895.91" font-size="15.99" textLength="62.73" lengthAdjust="spacingAndGlyphs" fill="#f2f2f2" stroke="#f2f2f2" stroke-width="0.2">5573.0000</text>
<text x="1366.52" y="895.91" font-size="15.99" textLength="62.73" lengthAdjust="spacingAndGlyphs" fill="#f2f2f2" stroke="#f2f2f2" stroke-width="0.2">5573.0000</text>
<text x="1437.39" y="895.91" font-size="15.99" textLength="62.73" lengthAdjust="spacingAndGlyphs" fill="#f2f2f2" stroke="#f2f2f2" stroke-width="0.2">5573.0000</text>
<text x="1508.26" y="895.91" font-size="15.99" textLength="62.73" lengthAdjust="spacingAndGlyphs" fill="#f2f2f2" stroke="#f2f2f2" stroke-width="0.2">5582.0000</text>
<text x="1579.13" y="895.91" font-size="15.99" textLength="62.73" lengthAdjust="spacingAndGlyphs" fill="#f2f2f2" stroke="#f2f2f2" stroke-width="0.2">5604.0000</text>
<text x="1650.00" y="895.91" font-size="15.99" textLength="62.73" lengthAdjust="spacingAndGlyphs" fill="#f2f2f2" stroke="#f2f2f2" stroke-width="0.2">5704.0000</text>
<rect x="816" y="902.38" width="901.3" height="24.66" fill="#414141"/>
<rect x="816" y="902.38" width="11.2" height="24.66" fill="#2a2a2a"/>
<text x="830.80" y="920.58" font-size="15.99" textLength="50.00" lengthAdjust="spacingAndGlyphs" fill="#f2f2f2" stroke="#f2f2f2" stroke-width="0.2">ΔE 2000</text>
<text x="941.30" y="920.58" font-size="15.99" textLength="40.59" lengthAdjust="spacingAndGlyphs" fill="#f2f2f2" stroke="#f2f2f2" stroke-width="0.2">0.4024</text>
<text x="1012.17" y="920.58" font-size="15.99" textLength="40.59" lengthAdjust="spacingAndGlyphs" fill="#f2f2f2" stroke="#f2f2f2" stroke-width="0.2">1.3842</text>
<text x="1083.04" y="920.58" font-size="15.99" textLength="40.59" lengthAdjust="spacingAndGlyphs" fill="#f2f2f2" stroke="#f2f2f2" stroke-width="0.2">2.6943</text>
<text x="1153.91" y="920.58" font-size="15.99" textLength="40.59" lengthAdjust="spacingAndGlyphs" fill="#f2f2f2" stroke="#f2f2f2" stroke-width="0.2">3.5701</text>
<text x="1224.78" y="920.58" font-size="15.99" textLength="40.59" lengthAdjust="spacingAndGlyphs" fill="#f2f2f2" stroke="#f2f2f2" stroke-width="0.2">4.4216</text>
<text x="1295.65" y="920.58" font-size="15.99" textLength="40.59" lengthAdjust="spacingAndGlyphs" fill="#f2f2f2" stroke="#f2f2f2" stroke-width="0.2">5.1567</text>
<text x="1366.52" y="920.58" font-size="15.99" textLength="40.59" lengthAdjust="spacingAndGlyphs" fill="#f2f2f2" stroke="#f2f2f2" stroke-width="0.2">5.8005</text>
<text x="1437.39" y="920.58" font-size="15.99" textLength="40.59" lengthAdjust="spacingAndGlyphs" fill="#f2f2f2" stroke="#f2f2f2" stroke-width="0.2">6.3162</text>
<text x="1508.26" y="920.58" font-size="15.99" textLength="40.59" lengthAdjust="spacingAndGlyphs" fill="#f2f2f2" stroke="#f2f2f2" stroke-width="0.2">6.7557</text>
<text x="1579.13" y="920.58" font-size="15.99" textLength="40.59" lengthAdjust="spacingAndGlyphs" fill="#f2f2f2" stroke="#f2f2f2" stroke-width="0.2">7.0993</text>
<text x="1650.00" y="920.58" font-size="15.99" textLength="40.59" lengthAdjust="spacingAndGlyphs" fill="#f2f2f2" stroke="#f2f2f2" stroke-width="0.2">6.9058</text>
<rect x="816" y="927.04" width="901.3" height="24.66" fill="#7f7f7f"/>
<rect x="816" y="927.04" width="11.2" height="24.66" fill="#1f1f1f"/>
<text x="830.80" y="945.24" font-size="15.99" textLength="34.00" lengthAdjust="spacingAndGlyphs" fill="#f2f2f2" stroke="#f2f2f2" stroke-width="0.2">dEITP</text>
<text x="941.30" y="945.24" font-size="15.99" textLength="40.59" lengthAdjust="spacingAndGlyphs" fill="#f2f2f2" stroke="#f2f2f2" stroke-width="0.2">4.5041</text>
<text x="1012.17" y="945.24" font-size="15.99" textLength="40.59" lengthAdjust="spacingAndGlyphs" fill="#f2f2f2" stroke="#f2f2f2" stroke-width="0.2">6.1085</text>
<text x="1083.04" y="945.24" font-size="15.99" textLength="40.59" lengthAdjust="spacingAndGlyphs" fill="#f2f2f2" stroke="#f2f2f2" stroke-width="0.2">8.6052</text>
<text x="1153.91" y="945.24" font-size="15.99" textLength="40.59" lengthAdjust="spacingAndGlyphs" fill="#f2f2f2" stroke="#f2f2f2" stroke-width="0.2">9.5833</text>
<text x="1224.78" y="945.24" font-size="15.99" textLength="47.97" lengthAdjust="spacingAndGlyphs" fill="#f2f2f2" stroke="#f2f2f2" stroke-width="0.2">10.6562</text>
<text x="1295.65" y="945.24" font-size="15.99" textLength="47.97" lengthAdjust="spacingAndGlyphs" fill="#f2f2f2" stroke="#f2f2f2" stroke-width="0.2">11.0086</text>
<text x="1366.52" y="945.24" font-size="15.99" textLength="47.97" lengthAdjust="spacingAndGlyphs" fill="#f2f2f2" stroke="#f2f2f2" stroke-width="0.2">11.7006</text>
<text x="1437.39" y="945.24" font-size="15.99" textLength="47.97" lengthAdjust="spacingAndGlyphs" fill="#f2f2f2" stroke="#f2f2f2" stroke-width="0.2">11.6477</text>
<text x="1508.26" y="945.24" font-size="15.99" textLength="47.97" lengthAdjust="spacingAndGlyphs" fill="#f2f2f2" stroke="#f2f2f2" stroke-width="0.2">11.1329</text>
<text x="1579.13" y="945.24" font-size="15.99" textLength="47.97" lengthAdjust="spacingAndGlyphs" fill="#f2f2f2" stroke="#f2f2f2" stroke-width="0.2">10.4231</text>
<text x="1650.00" y="945.24" font-size="15.99" textLength="40.59" lengthAdjust="spacingAndGlyphs" fill="#f2f2f2" stroke="#f2f2f2" stroke-width="0.2">9.1238</text>
<rect x="150" y="1008" width="1770" height="3" fill="#2c2c2c"/>
<rect x="1403" y="1011" width="517" height="47" fill="url(#tbar)"/>
<rect x="150" y="1011" width="1253" height="47" fill="#2a2a2a"/>
<rect x="151.00" y="1011.3" width="112.2" height="45.6" rx="3" fill="url(#btn)"/>
<rect x="151.80" y="1012" width="110.6" height="2" rx="1" fill="#b8b8b8" opacity="0.6"/>
<rect x="154.50" y="1015.1" width="104.9" height="27" rx="2.5" fill="rgb(0,0,0)" stroke="#6a6a6a" stroke-width="0.8"/>
<text x="207.10" y="1053.60" font-size="8.14" text-anchor="middle" fill="#3a3a3a">0</text>
<rect x="265.05" y="1011.3" width="112.2" height="45.6" rx="3" fill="url(#btn)"/>
<rect x="265.85" y="1012" width="110.6" height="2" rx="1" fill="#b8b8b8" opacity="0.6"/>
<rect x="268.55" y="1015.1" width="104.9" height="27" rx="2.5" fill="rgb(26,26,26)" stroke="#6a6a6a" stroke-width="0.8"/>
<text x="321.15" y="1053.60" font-size="8.14" text-anchor="middle" fill="#3a3a3a">10</text>
<rect x="379.10" y="1011.3" width="112.2" height="45.6" rx="3" fill="url(#btn)"/>
<rect x="379.90" y="1012" width="110.6" height="2" rx="1" fill="#b8b8b8" opacity="0.6"/>
<rect x="382.60" y="1015.1" width="104.9" height="27" rx="2.5" fill="rgb(51,51,51)" stroke="#6a6a6a" stroke-width="0.8"/>
<text x="435.20" y="1053.60" font-size="8.14" text-anchor="middle" fill="#3a3a3a">20</text>
<rect x="493.15" y="1011.3" width="112.2" height="45.6" rx="3" fill="url(#btn)"/>
<rect x="493.95" y="1012" width="110.6" height="2" rx="1" fill="#b8b8b8" opacity="0.6"/>
<rect x="496.65" y="1015.1" width="104.9" height="27" rx="2.5" fill="rgb(77,77,77)" stroke="#6a6a6a" stroke-width="0.8"/>
<text x="549.25" y="1053.60" font-size="8.14" text-anchor="middle" fill="#3a3a3a">30</text>
<rect x="607.20" y="1011.3" width="112.2" height="45.6" rx="3" fill="url(#btn)"/>
<rect x="608.00" y="1012" width="110.6" height="2" rx="1" fill="#b8b8b8" opacity="0.6"/>
<rect x="610.70" y="1015.1" width="104.9" height="27" rx="2.5" fill="rgb(102,102,102)" stroke="#6a6a6a" stroke-width="0.8"/>
<text x="663.30" y="1053.60" font-size="8.14" text-anchor="middle" fill="#3a3a3a">40</text>
<rect x="721.25" y="1011.3" width="112.2" height="45.6" rx="3" fill="url(#btn)"/>
<rect x="722.05" y="1012" width="110.6" height="2" rx="1" fill="#b8b8b8" opacity="0.6"/>
<rect x="724.75" y="1015.1" width="104.9" height="27" rx="2.5" fill="rgb(128,128,128)" stroke="#6a6a6a" stroke-width="0.8"/>
<text x="777.35" y="1053.60" font-size="8.14" text-anchor="middle" fill="#3a3a3a">50</text>
<rect x="835.30" y="1011.3" width="112.2" height="45.6" rx="3" fill="url(#btn)"/>
<rect x="836.10" y="1012" width="110.6" height="2" rx="1" fill="#b8b8b8" opacity="0.6"/>
<rect x="838.80" y="1015.1" width="104.9" height="27" rx="2.5" fill="rgb(153,153,153)" stroke="#6a6a6a" stroke-width="0.8"/>
<text x="891.40" y="1053.60" font-size="8.14" text-anchor="middle" fill="#3a3a3a">60</text>
<rect x="949.35" y="1011.3" width="112.2" height="45.6" rx="3" fill="url(#btn)"/>
<rect x="950.15" y="1012" width="110.6" height="2" rx="1" fill="#b8b8b8" opacity="0.6"/>
<rect x="952.85" y="1015.1" width="104.9" height="27" rx="2.5" fill="rgb(179,179,179)" stroke="#6a6a6a" stroke-width="0.8"/>
<text x="1005.45" y="1053.60" font-size="8.14" text-anchor="middle" fill="#3a3a3a">70</text>
<rect x="1063.40" y="1011.3" width="112.2" height="45.6" rx="3" fill="url(#btn)"/>
<rect x="1064.20" y="1012" width="110.6" height="2" rx="1" fill="#b8b8b8" opacity="0.6"/>
<rect x="1066.90" y="1015.1" width="104.9" height="27" rx="2.5" fill="rgb(204,204,204)" stroke="#6a6a6a" stroke-width="0.8"/>
<text x="1119.50" y="1053.60" font-size="8.14" text-anchor="middle" fill="#3a3a3a">80</text>
<rect x="1177.45" y="1011.3" width="112.2" height="45.6" rx="3" fill="url(#btn)"/>
<rect x="1178.25" y="1012" width="110.6" height="2" rx="1" fill="#b8b8b8" opacity="0.6"/>
<rect x="1180.95" y="1015.1" width="104.9" height="27" rx="2.5" fill="rgb(230,230,230)" stroke="#6a6a6a" stroke-width="0.8"/>
<text x="1233.55" y="1053.60" font-size="8.14" text-anchor="middle" fill="#3a3a3a">90</text>
<rect x="1291.50" y="1011.7" width="111.4" height="44.8" rx="3" fill="url(#btnsel)"/>
<rect x="1294.60" y="1015.3" width="105.2" height="27.1" rx="2.5" fill="#fff"/>
<text x="1347.50" y="1053.50" font-size="8.72" font-weight="bold" text-anchor="middle" fill="#fff">100</text>
<defs><linearGradient id="bn" x1="0" x2="0" y1="0" y2="1"><stop offset="0" stop-color="#cacaca"/><stop offset="0.5" stop-color="#aaaaaa"/><stop offset="1" stop-color="#8c8c8c"/></linearGradient><linearGradient id="sb" x1="0" x2="0" y1="0" y2="1"><stop offset="0" stop-color="#8e8e8e"/><stop offset="1" stop-color="#626262"/></linearGradient><radialGradient id="rb" cx="0.5" cy="0.4" r="0.6"><stop offset="0" stop-color="#c4c4c4"/><stop offset="0.7" stop-color="#a0a0a0"/><stop offset="1" stop-color="#7a7a7a"/></radialGradient></defs>
<rect x="1884" y="1012" width="36" height="22" fill="#222"/>
<rect x="1715.00" y="1011.5" width="33.5" height="22" rx="2" fill="url(#sb)"/>
<circle cx="1732.00" cy="1021" r="7" fill="#7a7a7a"/>
<rect x="1749.50" y="1011.5" width="33.5" height="22" rx="2" fill="url(#sb)"/>
<circle cx="1766.50" cy="1021" r="7" fill="#7a7a7a"/>
<rect x="1784.00" y="1011.5" width="33.5" height="22" rx="2" fill="url(#sb)"/>
<circle cx="1801.00" cy="1021" r="7" fill="#7a7a7a"/>
<rect x="1818.50" y="1011.5" width="33.5" height="22" rx="2" fill="url(#sb)"/>
<circle cx="1835.50" cy="1021" r="7" fill="#7a7a7a"/>
<rect x="1853.00" y="1011.5" width="33.5" height="22" rx="2" fill="url(#sb)"/>
<circle cx="1870.00" cy="1021" r="7" fill="#7a7a7a"/>
<rect x="1677.8" y="1026.5" width="35.2" height="31.5" rx="3" fill="url(#sb)"/>
<rect x="1685" y="1031" width="21" height="21" rx="3.5" fill="#8a8a8a" stroke="#1e1e1e" stroke-width="2.2"/>
<rect x="1690" y="1037.5" width="11" height="9.5" fill="#000"/>
<rect x="1715" y="1035" width="203" height="23" rx="3" fill="url(#bn)"/>
<line x1="1816" y1="1035" x2="1816" y2="1058" stroke="#707070" stroke-width="1.2"/>
<circle cx="1737.7" cy="1046" r="7.2" fill="url(#rb)"/>
<path d="M1737 1042.5 L1734 1046 L1737 1049.5 M1740.5 1042.5 L1737.5 1046 L1740.5 1049.5" fill="none" stroke="#2a2a2a" stroke-width="1.1"/>
<circle cx="1897.7" cy="1046" r="7.2" fill="url(#rb)"/>
<path d="M1895 1042.5 L1898 1046 L1895 1049.5 M1898.5 1042.5 L1901.5 1046 L1898.5 1049.5" fill="none" stroke="#2a2a2a" stroke-width="1.1"/>
<text x="1757.50" y="1051.70" font-size="16.72" textLength="37.50" lengthAdjust="spacingAndGlyphs" fill="#262626" stroke="#262626" stroke-width="0.2">Back</text>
<text x="1837.50" y="1051.70" font-size="16.72" textLength="38.30" lengthAdjust="spacingAndGlyphs" fill="#262626" stroke="#262626" stroke-width="0.2">Next</text>
<g opacity="0.8">
<path d="M1630 995 L1668 1002 M1630 995 L1634 1028 L1655 1045 L1698 1031.7 L1640 1029" fill="none" stroke="#e8c8c8" stroke-width="4.2" stroke-linejoin="round" stroke-linecap="round" opacity="0.6"/>
<path d="M1630 995 L1668 1002 M1630 995 L1634 1028 L1655 1045 L1698 1031.7 L1640 1029" fill="none" stroke="#a02828" stroke-width="2.6" stroke-linejoin="round" stroke-linecap="round"/>
<path d="M1641.7 1009 L1651.7 1022.5 L1675 995" fill="none" stroke="#d0d0d0" stroke-width="4.6" stroke-linejoin="round" stroke-linecap="round" opacity="0.6"/>
<path d="M1641.7 1009 L1651.7 1022.5 L1675 995" fill="none" stroke="#2a2a2a" stroke-width="3" stroke-linejoin="round" stroke-linecap="round"/>
<text x="1675.50" y="1025.50" font-size="29.07" textLength="148.00" lengthAdjust="spacingAndGlyphs" font-weight="bold" fill="#a83030" stroke="#e0b0b0" stroke-width="1" paint-order="stroke">NOTEBOOK</text>
<text x="1823.30" y="1025.50" font-size="29.07" textLength="88.50" lengthAdjust="spacingAndGlyphs" font-weight="bold" fill="#2e2e2e" stroke="#d8d8d8" stroke-width="1.2">CHECK</text>
</g>
</svg>
</body></html>
